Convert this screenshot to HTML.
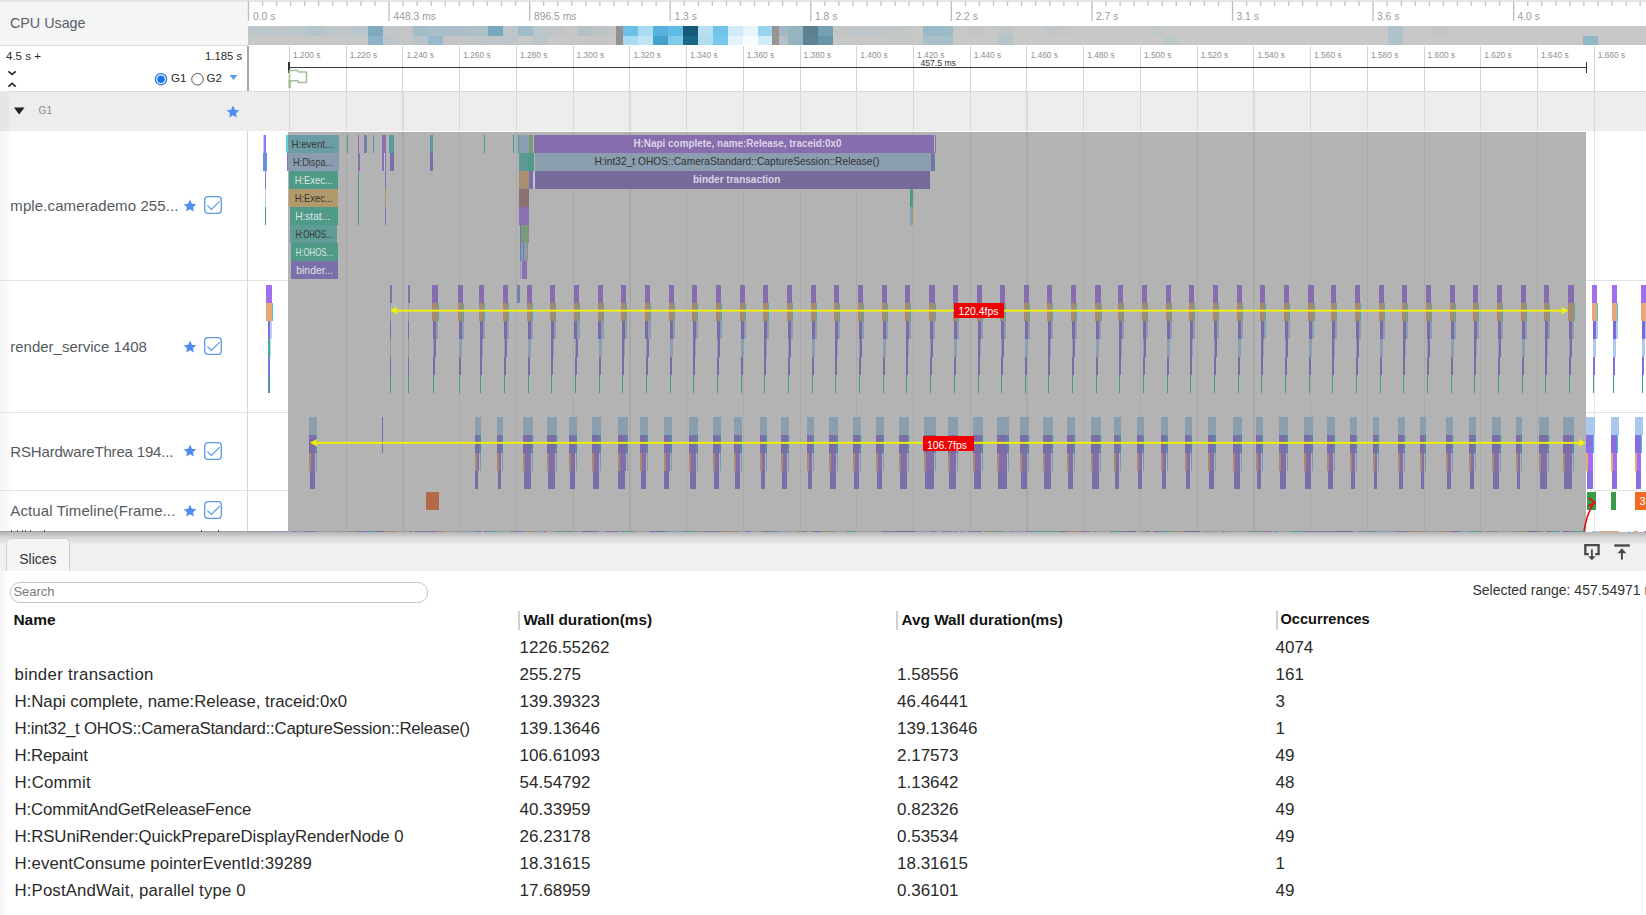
<!DOCTYPE html><html><head><meta charset="utf-8"><style>
html,body{margin:0;padding:0;}
body{width:1646px;height:915px;overflow:hidden;position:relative;background:#fff;font-family:"Liberation Sans", sans-serif;}
div{box-sizing:border-box;}
</style></head><body>
<div style="position:absolute;left:0px;top:0px;width:248px;height:46px;background:#f5f5f5;"></div>
<div style="position:absolute;left:0px;top:0px;width:1646px;height:1.6px;background:#e6e6e6;"></div>
<div style="position:absolute;left:0px;top:45px;width:248px;height:1px;background:#dcdcdc;"></div>
<div style="position:absolute;left:10px;top:16px;font-size:14.3px;line-height:1;color:#56606a;font-weight:400;white-space:nowrap;">CPU Usage</div>
<div style="position:absolute;left:248px;top:2px;width:1398px;height:24px;background:#ffffff;"></div>
<svg style="position:absolute;left:0;top:0" width="1646" height="46"><rect x="247.8" y="1" width="1.3" height="20" fill="#bdbdbd"/><rect x="261.9" y="1" width="1.3" height="5" fill="#c4c4c4"/><rect x="275.9" y="1" width="1.3" height="5" fill="#c4c4c4"/><rect x="290.0" y="1" width="1.3" height="5" fill="#c4c4c4"/><rect x="304.0" y="1" width="1.3" height="5" fill="#c4c4c4"/><rect x="318.1" y="1" width="1.3" height="5" fill="#c4c4c4"/><rect x="332.1" y="1" width="1.3" height="5" fill="#c4c4c4"/><rect x="346.2" y="1" width="1.3" height="5" fill="#c4c4c4"/><rect x="360.3" y="1" width="1.3" height="5" fill="#c4c4c4"/><rect x="374.3" y="1" width="1.3" height="5" fill="#c4c4c4"/><rect x="388.4" y="1" width="1.3" height="20" fill="#bdbdbd"/><rect x="402.4" y="1" width="1.3" height="5" fill="#c4c4c4"/><rect x="416.5" y="1" width="1.3" height="5" fill="#c4c4c4"/><rect x="430.6" y="1" width="1.3" height="5" fill="#c4c4c4"/><rect x="444.6" y="1" width="1.3" height="5" fill="#c4c4c4"/><rect x="458.7" y="1" width="1.3" height="5" fill="#c4c4c4"/><rect x="472.7" y="1" width="1.3" height="5" fill="#c4c4c4"/><rect x="486.8" y="1" width="1.3" height="5" fill="#c4c4c4"/><rect x="500.8" y="1" width="1.3" height="5" fill="#c4c4c4"/><rect x="514.9" y="1" width="1.3" height="5" fill="#c4c4c4"/><rect x="529.0" y="1" width="1.3" height="20" fill="#bdbdbd"/><rect x="543.0" y="1" width="1.3" height="5" fill="#c4c4c4"/><rect x="557.1" y="1" width="1.3" height="5" fill="#c4c4c4"/><rect x="571.1" y="1" width="1.3" height="5" fill="#c4c4c4"/><rect x="585.2" y="1" width="1.3" height="5" fill="#c4c4c4"/><rect x="599.2" y="1" width="1.3" height="5" fill="#c4c4c4"/><rect x="613.3" y="1" width="1.3" height="5" fill="#c4c4c4"/><rect x="627.4" y="1" width="1.3" height="5" fill="#c4c4c4"/><rect x="641.4" y="1" width="1.3" height="5" fill="#c4c4c4"/><rect x="655.5" y="1" width="1.3" height="5" fill="#c4c4c4"/><rect x="669.5" y="1" width="1.3" height="20" fill="#bdbdbd"/><rect x="683.6" y="1" width="1.3" height="5" fill="#c4c4c4"/><rect x="697.7" y="1" width="1.3" height="5" fill="#c4c4c4"/><rect x="711.7" y="1" width="1.3" height="5" fill="#c4c4c4"/><rect x="725.8" y="1" width="1.3" height="5" fill="#c4c4c4"/><rect x="739.8" y="1" width="1.3" height="5" fill="#c4c4c4"/><rect x="753.9" y="1" width="1.3" height="5" fill="#c4c4c4"/><rect x="767.9" y="1" width="1.3" height="5" fill="#c4c4c4"/><rect x="782.0" y="1" width="1.3" height="5" fill="#c4c4c4"/><rect x="796.1" y="1" width="1.3" height="5" fill="#c4c4c4"/><rect x="810.1" y="1" width="1.3" height="20" fill="#bdbdbd"/><rect x="824.2" y="1" width="1.3" height="5" fill="#c4c4c4"/><rect x="838.2" y="1" width="1.3" height="5" fill="#c4c4c4"/><rect x="852.3" y="1" width="1.3" height="5" fill="#c4c4c4"/><rect x="866.4" y="1" width="1.3" height="5" fill="#c4c4c4"/><rect x="880.4" y="1" width="1.3" height="5" fill="#c4c4c4"/><rect x="894.5" y="1" width="1.3" height="5" fill="#c4c4c4"/><rect x="908.5" y="1" width="1.3" height="5" fill="#c4c4c4"/><rect x="922.6" y="1" width="1.3" height="5" fill="#c4c4c4"/><rect x="936.6" y="1" width="1.3" height="5" fill="#c4c4c4"/><rect x="950.7" y="1" width="1.3" height="20" fill="#bdbdbd"/><rect x="964.8" y="1" width="1.3" height="5" fill="#c4c4c4"/><rect x="978.8" y="1" width="1.3" height="5" fill="#c4c4c4"/><rect x="992.9" y="1" width="1.3" height="5" fill="#c4c4c4"/><rect x="1006.9" y="1" width="1.3" height="5" fill="#c4c4c4"/><rect x="1021.0" y="1" width="1.3" height="5" fill="#c4c4c4"/><rect x="1035.0" y="1" width="1.3" height="5" fill="#c4c4c4"/><rect x="1049.1" y="1" width="1.3" height="5" fill="#c4c4c4"/><rect x="1063.2" y="1" width="1.3" height="5" fill="#c4c4c4"/><rect x="1077.2" y="1" width="1.3" height="5" fill="#c4c4c4"/><rect x="1091.3" y="1" width="1.3" height="20" fill="#bdbdbd"/><rect x="1105.3" y="1" width="1.3" height="5" fill="#c4c4c4"/><rect x="1119.4" y="1" width="1.3" height="5" fill="#c4c4c4"/><rect x="1133.5" y="1" width="1.3" height="5" fill="#c4c4c4"/><rect x="1147.5" y="1" width="1.3" height="5" fill="#c4c4c4"/><rect x="1161.6" y="1" width="1.3" height="5" fill="#c4c4c4"/><rect x="1175.6" y="1" width="1.3" height="5" fill="#c4c4c4"/><rect x="1189.7" y="1" width="1.3" height="5" fill="#c4c4c4"/><rect x="1203.7" y="1" width="1.3" height="5" fill="#c4c4c4"/><rect x="1217.8" y="1" width="1.3" height="5" fill="#c4c4c4"/><rect x="1231.9" y="1" width="1.3" height="20" fill="#bdbdbd"/><rect x="1245.9" y="1" width="1.3" height="5" fill="#c4c4c4"/><rect x="1260.0" y="1" width="1.3" height="5" fill="#c4c4c4"/><rect x="1274.0" y="1" width="1.3" height="5" fill="#c4c4c4"/><rect x="1288.1" y="1" width="1.3" height="5" fill="#c4c4c4"/><rect x="1302.1" y="1" width="1.3" height="5" fill="#c4c4c4"/><rect x="1316.2" y="1" width="1.3" height="5" fill="#c4c4c4"/><rect x="1330.3" y="1" width="1.3" height="5" fill="#c4c4c4"/><rect x="1344.3" y="1" width="1.3" height="5" fill="#c4c4c4"/><rect x="1358.4" y="1" width="1.3" height="5" fill="#c4c4c4"/><rect x="1372.4" y="1" width="1.3" height="20" fill="#bdbdbd"/><rect x="1386.5" y="1" width="1.3" height="5" fill="#c4c4c4"/><rect x="1400.6" y="1" width="1.3" height="5" fill="#c4c4c4"/><rect x="1414.6" y="1" width="1.3" height="5" fill="#c4c4c4"/><rect x="1428.7" y="1" width="1.3" height="5" fill="#c4c4c4"/><rect x="1442.7" y="1" width="1.3" height="5" fill="#c4c4c4"/><rect x="1456.8" y="1" width="1.3" height="5" fill="#c4c4c4"/><rect x="1470.8" y="1" width="1.3" height="5" fill="#c4c4c4"/><rect x="1484.9" y="1" width="1.3" height="5" fill="#c4c4c4"/><rect x="1499.0" y="1" width="1.3" height="5" fill="#c4c4c4"/><rect x="1513.0" y="1" width="1.3" height="20" fill="#bdbdbd"/><rect x="1527.1" y="1" width="1.3" height="5" fill="#c4c4c4"/><rect x="1541.1" y="1" width="1.3" height="5" fill="#c4c4c4"/><rect x="1555.2" y="1" width="1.3" height="5" fill="#c4c4c4"/><rect x="1569.3" y="1" width="1.3" height="5" fill="#c4c4c4"/><rect x="1583.3" y="1" width="1.3" height="5" fill="#c4c4c4"/><rect x="1597.4" y="1" width="1.3" height="5" fill="#c4c4c4"/><rect x="1611.4" y="1" width="1.3" height="5" fill="#c4c4c4"/><rect x="1625.5" y="1" width="1.3" height="5" fill="#c4c4c4"/><rect x="1639.5" y="1" width="1.3" height="5" fill="#c4c4c4"/></svg>
<div style="position:absolute;left:253.0px;top:12px;font-size:10.3px;line-height:1;color:#9a9a9a;font-weight:400;white-space:nowrap;">0.0 s</div>
<div style="position:absolute;left:393.5px;top:12px;font-size:10.3px;line-height:1;color:#9a9a9a;font-weight:400;white-space:nowrap;">448.3 ms</div>
<div style="position:absolute;left:534.0px;top:12px;font-size:10.3px;line-height:1;color:#9a9a9a;font-weight:400;white-space:nowrap;">896.5 ms</div>
<div style="position:absolute;left:674.5px;top:12px;font-size:10.3px;line-height:1;color:#9a9a9a;font-weight:400;white-space:nowrap;">1.3 s</div>
<div style="position:absolute;left:815.0px;top:12px;font-size:10.3px;line-height:1;color:#9a9a9a;font-weight:400;white-space:nowrap;">1.8 s</div>
<div style="position:absolute;left:955.5px;top:12px;font-size:10.3px;line-height:1;color:#9a9a9a;font-weight:400;white-space:nowrap;">2.2 s</div>
<div style="position:absolute;left:1096.0px;top:12px;font-size:10.3px;line-height:1;color:#9a9a9a;font-weight:400;white-space:nowrap;">2.7 s</div>
<div style="position:absolute;left:1236.5px;top:12px;font-size:10.3px;line-height:1;color:#9a9a9a;font-weight:400;white-space:nowrap;">3.1 s</div>
<div style="position:absolute;left:1377.0px;top:12px;font-size:10.3px;line-height:1;color:#9a9a9a;font-weight:400;white-space:nowrap;">3.6 s</div>
<div style="position:absolute;left:1517.5px;top:12px;font-size:10.3px;line-height:1;color:#9a9a9a;font-weight:400;white-space:nowrap;">4.0 s</div>
<svg style="position:absolute;left:0;top:0" width="1646" height="46" shape-rendering="crispEdges"><rect x="247.80" y="26" width="15.60" height="9.5" fill="#bcc6ca"/><rect x="247.80" y="35.5" width="15.60" height="9.5" fill="#c6c8c8"/><rect x="262.80" y="26" width="15.60" height="9.5" fill="#bcc6ca"/><rect x="262.80" y="35.5" width="15.60" height="9.5" fill="#c6c8c8"/><rect x="277.80" y="26" width="15.60" height="9.5" fill="#bec6ca"/><rect x="277.80" y="35.5" width="15.60" height="9.5" fill="#c4c8c8"/><rect x="292.80" y="26" width="15.60" height="9.5" fill="#bcc6ca"/><rect x="292.80" y="35.5" width="15.60" height="9.5" fill="#c6c8c8"/><rect x="307.80" y="26" width="15.60" height="9.5" fill="#b4c4cc"/><rect x="307.80" y="35.5" width="15.60" height="9.5" fill="#c4c8c8"/><rect x="322.80" y="26" width="15.60" height="9.5" fill="#bcc6ca"/><rect x="322.80" y="35.5" width="15.60" height="9.5" fill="#c6c8c8"/><rect x="337.80" y="26" width="15.60" height="9.5" fill="#bec6ca"/><rect x="337.80" y="35.5" width="15.60" height="9.5" fill="#c4c8c8"/><rect x="352.80" y="26" width="15.60" height="9.5" fill="#b8c6cc"/><rect x="352.80" y="35.5" width="15.60" height="9.5" fill="#c6c8c8"/><rect x="367.80" y="26" width="15.60" height="9.5" fill="#80aac0"/><rect x="367.80" y="35.5" width="15.60" height="9.5" fill="#8cb4c6"/><rect x="382.80" y="26" width="15.60" height="9.5" fill="#c2c6c8"/><rect x="382.80" y="35.5" width="15.60" height="9.5" fill="#bcc6ca"/><rect x="397.80" y="26" width="15.60" height="9.5" fill="#c4c6c6"/><rect x="397.80" y="35.5" width="15.60" height="9.5" fill="#c4c6c6"/><rect x="412.80" y="26" width="15.60" height="9.5" fill="#a2bcc8"/><rect x="412.80" y="35.5" width="15.60" height="9.5" fill="#b8c4ca"/><rect x="427.80" y="26" width="15.60" height="9.5" fill="#a8bec8"/><rect x="427.80" y="35.5" width="15.60" height="9.5" fill="#98bacc"/><rect x="442.80" y="26" width="15.60" height="9.5" fill="#aabec8"/><rect x="442.80" y="35.5" width="15.60" height="9.5" fill="#c4c6c6"/><rect x="457.80" y="26" width="15.60" height="9.5" fill="#acbec8"/><rect x="457.80" y="35.5" width="15.60" height="9.5" fill="#c4c6c6"/><rect x="472.80" y="26" width="15.60" height="9.5" fill="#aec0c8"/><rect x="472.80" y="35.5" width="15.60" height="9.5" fill="#bcc6ca"/><rect x="487.80" y="26" width="15.60" height="9.5" fill="#78a8c0"/><rect x="487.80" y="35.5" width="15.60" height="9.5" fill="#c0c6c8"/><rect x="502.80" y="26" width="15.60" height="9.5" fill="#bcc6ca"/><rect x="502.80" y="35.5" width="15.60" height="9.5" fill="#bcc6ca"/><rect x="517.80" y="26" width="15.60" height="9.5" fill="#a0bccc"/><rect x="517.80" y="35.5" width="15.60" height="9.5" fill="#c6c8c8"/><rect x="532.80" y="26" width="15.60" height="9.5" fill="#bcc6ca"/><rect x="532.80" y="35.5" width="15.60" height="9.5" fill="#bcc6ca"/><rect x="547.80" y="26" width="15.60" height="9.5" fill="#c0c4c6"/><rect x="547.80" y="35.5" width="15.60" height="9.5" fill="#c8c8c8"/><rect x="562.80" y="26" width="15.60" height="9.5" fill="#c6c6c6"/><rect x="562.80" y="35.5" width="15.60" height="9.5" fill="#c8c6c6"/><rect x="577.80" y="26" width="15.60" height="9.5" fill="#b4c0c6"/><rect x="577.80" y="35.5" width="15.60" height="9.5" fill="#c4c6c6"/><rect x="592.80" y="26" width="15.60" height="9.5" fill="#bcc4c6"/><rect x="592.80" y="35.5" width="15.60" height="9.5" fill="#c4c6c6"/><rect x="607.80" y="26" width="15.60" height="9.5" fill="#c4c4c4"/><rect x="607.80" y="35.5" width="15.60" height="9.5" fill="#c8c8c8"/><rect x="622.80" y="26" width="15.60" height="9.5" fill="#6cc0e8"/><rect x="622.80" y="35.5" width="15.60" height="9.5" fill="#a8daf0"/><rect x="637.80" y="26" width="15.60" height="9.5" fill="#a8daf0"/><rect x="637.80" y="35.5" width="15.60" height="9.5" fill="#c0e4f4"/><rect x="652.80" y="26" width="15.60" height="9.5" fill="#58b0dc"/><rect x="652.80" y="35.5" width="15.60" height="9.5" fill="#44a0cc"/><rect x="667.80" y="26" width="15.60" height="9.5" fill="#60bce4"/><rect x="667.80" y="35.5" width="15.60" height="9.5" fill="#80cce8"/><rect x="682.80" y="26" width="15.60" height="9.5" fill="#185878"/><rect x="682.80" y="35.5" width="15.60" height="9.5" fill="#186a88"/><rect x="697.80" y="26" width="15.60" height="9.5" fill="#b8e0f4"/><rect x="697.80" y="35.5" width="15.60" height="9.5" fill="#b0dcf0"/><rect x="712.80" y="26" width="15.60" height="9.5" fill="#70c4e8"/><rect x="712.80" y="35.5" width="15.60" height="9.5" fill="#78c8ec"/><rect x="727.80" y="26" width="15.60" height="9.5" fill="#d0ecf8"/><rect x="727.80" y="35.5" width="15.60" height="9.5" fill="#e4f4fc"/><rect x="742.80" y="26" width="15.60" height="9.5" fill="#e8f6fc"/><rect x="742.80" y="35.5" width="15.60" height="9.5" fill="#f8fcfe"/><rect x="757.80" y="26" width="15.60" height="9.5" fill="#98d4f0"/><rect x="757.80" y="35.5" width="15.60" height="9.5" fill="#d0ecf8"/><rect x="772.80" y="26" width="15.60" height="9.5" fill="#a2b8c0"/><rect x="772.80" y="35.5" width="15.60" height="9.5" fill="#b4c0c4"/><rect x="787.80" y="26" width="15.60" height="9.5" fill="#94b4c0"/><rect x="787.80" y="35.5" width="15.60" height="9.5" fill="#94b4c0"/><rect x="802.80" y="26" width="15.60" height="9.5" fill="#5c8090"/><rect x="802.80" y="35.5" width="15.60" height="9.5" fill="#5c8494"/><rect x="817.80" y="26" width="15.60" height="9.5" fill="#74a0b4"/><rect x="817.80" y="35.5" width="15.60" height="9.5" fill="#6894a4"/><rect x="832.80" y="26" width="15.60" height="9.5" fill="#c4c6c6"/><rect x="832.80" y="35.5" width="15.60" height="9.5" fill="#c6c8c8"/><rect x="847.80" y="26" width="15.60" height="9.5" fill="#bec6ca"/><rect x="847.80" y="35.5" width="15.60" height="9.5" fill="#c6c8c8"/><rect x="862.80" y="26" width="15.60" height="9.5" fill="#bec6ca"/><rect x="862.80" y="35.5" width="15.60" height="9.5" fill="#c6c8c8"/><rect x="877.80" y="26" width="15.60" height="9.5" fill="#c2c6c8"/><rect x="877.80" y="35.5" width="15.60" height="9.5" fill="#c6c8c8"/><rect x="892.80" y="26" width="15.60" height="9.5" fill="#c2c6c8"/><rect x="892.80" y="35.5" width="15.60" height="9.5" fill="#c4c6c8"/><rect x="907.80" y="26" width="15.60" height="9.5" fill="#c6c8c8"/><rect x="907.80" y="35.5" width="15.60" height="9.5" fill="#c6c8c8"/><rect x="922.80" y="26" width="15.60" height="9.5" fill="#98bac8"/><rect x="922.80" y="35.5" width="15.60" height="9.5" fill="#a8c0ca"/><rect x="937.80" y="26" width="15.60" height="9.5" fill="#9cbcc8"/><rect x="937.80" y="35.5" width="15.60" height="9.5" fill="#a8c0ca"/><rect x="952.80" y="26" width="15.60" height="9.5" fill="#c8c8c8"/><rect x="952.80" y="35.5" width="15.60" height="9.5" fill="#c8c8c8"/><rect x="967.80" y="26" width="15.60" height="9.5" fill="#c2c6c8"/><rect x="967.80" y="35.5" width="15.60" height="9.5" fill="#c8c8c8"/><rect x="982.80" y="26" width="15.60" height="9.5" fill="#c6c8c8"/><rect x="982.80" y="35.5" width="15.60" height="9.5" fill="#c8c8c8"/><rect x="997.80" y="26" width="15.60" height="9.5" fill="#c0c6c8"/><rect x="997.80" y="35.5" width="15.60" height="9.5" fill="#b4c4c8"/><rect x="1012.80" y="26" width="15.60" height="9.5" fill="#c8c8c8"/><rect x="1012.80" y="35.5" width="15.60" height="9.5" fill="#c8c8c8"/><rect x="1027.80" y="26" width="15.60" height="9.5" fill="#c8c8c8"/><rect x="1027.80" y="35.5" width="15.60" height="9.5" fill="#c8c8c8"/><rect x="1042.80" y="26" width="15.60" height="9.5" fill="#c2c6c8"/><rect x="1042.80" y="35.5" width="15.60" height="9.5" fill="#c8c8c8"/><rect x="1057.80" y="26" width="15.60" height="9.5" fill="#c4c6c8"/><rect x="1057.80" y="35.5" width="15.60" height="9.5" fill="#c8c8c8"/><rect x="1072.80" y="26" width="15.60" height="9.5" fill="#c8c8c8"/><rect x="1072.80" y="35.5" width="15.60" height="9.5" fill="#c8c8c8"/><rect x="1087.80" y="26" width="15.60" height="9.5" fill="#c8c8c8"/><rect x="1087.80" y="35.5" width="15.60" height="9.5" fill="#c8c8c8"/><rect x="1102.80" y="26" width="15.60" height="9.5" fill="#c8c8c8"/><rect x="1102.80" y="35.5" width="15.60" height="9.5" fill="#c8c8c8"/><rect x="1117.80" y="26" width="15.60" height="9.5" fill="#c8c8c8"/><rect x="1117.80" y="35.5" width="15.60" height="9.5" fill="#c8c8c8"/><rect x="1132.80" y="26" width="15.60" height="9.5" fill="#c8c8c8"/><rect x="1132.80" y="35.5" width="15.60" height="9.5" fill="#c8c8c8"/><rect x="1147.80" y="26" width="15.60" height="9.5" fill="#c0c8ca"/><rect x="1147.80" y="35.5" width="15.60" height="9.5" fill="#c8c8c8"/><rect x="1162.80" y="26" width="15.60" height="9.5" fill="#c8c8c8"/><rect x="1162.80" y="35.5" width="15.60" height="9.5" fill="#bcc8c6"/><rect x="1177.80" y="26" width="15.60" height="9.5" fill="#c8c8c8"/><rect x="1177.80" y="35.5" width="15.60" height="9.5" fill="#c8c8c8"/><rect x="1192.80" y="26" width="15.60" height="9.5" fill="#c8c8c8"/><rect x="1192.80" y="35.5" width="15.60" height="9.5" fill="#c8c8c8"/><rect x="1207.80" y="26" width="15.60" height="9.5" fill="#c8c8c8"/><rect x="1207.80" y="35.5" width="15.60" height="9.5" fill="#c8c8c8"/><rect x="1222.80" y="26" width="15.60" height="9.5" fill="#c8c8c8"/><rect x="1222.80" y="35.5" width="15.60" height="9.5" fill="#c8c8c8"/><rect x="1237.80" y="26" width="15.60" height="9.5" fill="#c8c8c8"/><rect x="1237.80" y="35.5" width="15.60" height="9.5" fill="#c8c8c8"/><rect x="1252.80" y="26" width="15.60" height="9.5" fill="#c8c8c8"/><rect x="1252.80" y="35.5" width="15.60" height="9.5" fill="#c8c8c8"/><rect x="1267.80" y="26" width="15.60" height="9.5" fill="#c8c8c8"/><rect x="1267.80" y="35.5" width="15.60" height="9.5" fill="#c8c8c8"/><rect x="1282.80" y="26" width="15.60" height="9.5" fill="#c8c8c8"/><rect x="1282.80" y="35.5" width="15.60" height="9.5" fill="#c8c8c8"/><rect x="1297.80" y="26" width="15.60" height="9.5" fill="#c8c8c8"/><rect x="1297.80" y="35.5" width="15.60" height="9.5" fill="#c8c8c8"/><rect x="1312.80" y="26" width="15.60" height="9.5" fill="#c8c8c8"/><rect x="1312.80" y="35.5" width="15.60" height="9.5" fill="#c8c8c8"/><rect x="1327.80" y="26" width="15.60" height="9.5" fill="#c8c8c8"/><rect x="1327.80" y="35.5" width="15.60" height="9.5" fill="#c8c8c8"/><rect x="1342.80" y="26" width="15.60" height="9.5" fill="#c8c8c8"/><rect x="1342.80" y="35.5" width="15.60" height="9.5" fill="#c8c8c8"/><rect x="1357.80" y="26" width="15.60" height="9.5" fill="#c8c8c8"/><rect x="1357.80" y="35.5" width="15.60" height="9.5" fill="#c8c8c8"/><rect x="1372.80" y="26" width="15.60" height="9.5" fill="#c8c8c8"/><rect x="1372.80" y="35.5" width="15.60" height="9.5" fill="#c8c8c8"/><rect x="1387.80" y="26" width="15.60" height="9.5" fill="#adc2ca"/><rect x="1387.80" y="35.5" width="15.60" height="9.5" fill="#adc2ca"/><rect x="1402.80" y="26" width="15.60" height="9.5" fill="#c8c8c8"/><rect x="1402.80" y="35.5" width="15.60" height="9.5" fill="#c8c8c8"/><rect x="1417.80" y="26" width="15.60" height="9.5" fill="#c8c8c8"/><rect x="1417.80" y="35.5" width="15.60" height="9.5" fill="#c8c8c8"/><rect x="1432.80" y="26" width="15.60" height="9.5" fill="#c0c6c8"/><rect x="1432.80" y="35.5" width="15.60" height="9.5" fill="#c8c8c8"/><rect x="1447.80" y="26" width="15.60" height="9.5" fill="#c8c8c8"/><rect x="1447.80" y="35.5" width="15.60" height="9.5" fill="#c8c8c8"/><rect x="1462.80" y="26" width="15.60" height="9.5" fill="#c8c8c8"/><rect x="1462.80" y="35.5" width="15.60" height="9.5" fill="#c8c8c8"/><rect x="1477.80" y="26" width="15.60" height="9.5" fill="#c8c8c8"/><rect x="1477.80" y="35.5" width="15.60" height="9.5" fill="#c8c8c8"/><rect x="1492.80" y="26" width="15.60" height="9.5" fill="#c8c8c8"/><rect x="1492.80" y="35.5" width="15.60" height="9.5" fill="#c8c8c8"/><rect x="1507.80" y="26" width="15.60" height="9.5" fill="#c8c8c8"/><rect x="1507.80" y="35.5" width="15.60" height="9.5" fill="#c8c8c8"/><rect x="1522.80" y="26" width="15.60" height="9.5" fill="#c8c8c8"/><rect x="1522.80" y="35.5" width="15.60" height="9.5" fill="#c8c8c8"/><rect x="1537.80" y="26" width="15.60" height="9.5" fill="#c8c8c8"/><rect x="1537.80" y="35.5" width="15.60" height="9.5" fill="#c8c8c8"/><rect x="1552.80" y="26" width="15.60" height="9.5" fill="#c8c8c8"/><rect x="1552.80" y="35.5" width="15.60" height="9.5" fill="#c8c8c8"/><rect x="1567.80" y="26" width="15.60" height="9.5" fill="#c8c8c8"/><rect x="1567.80" y="35.5" width="15.60" height="9.5" fill="#c8c8c8"/><rect x="1582.80" y="26" width="15.60" height="9.5" fill="#c8c8c8"/><rect x="1582.80" y="35.5" width="15.60" height="9.5" fill="#90b8c8"/><rect x="1597.80" y="26" width="15.60" height="9.5" fill="#c8c8c8"/><rect x="1597.80" y="35.5" width="15.60" height="9.5" fill="#c8c8c8"/><rect x="1612.80" y="26" width="15.60" height="9.5" fill="#c8c8c8"/><rect x="1612.80" y="35.5" width="15.60" height="9.5" fill="#c8c8c8"/><rect x="1627.80" y="26" width="15.60" height="9.5" fill="#c8c8c8"/><rect x="1627.80" y="35.5" width="15.60" height="9.5" fill="#c8c8c8"/><rect x="1642.80" y="26" width="3.20" height="9.5" fill="#c8c8c8"/><rect x="1642.80" y="35.5" width="3.20" height="9.5" fill="#c8c8c8"/><rect x="616" y="26" width="6.5" height="19" fill="#929292"/><rect x="772" y="26" width="6.5" height="19" fill="#989494"/></svg>
<div style="position:absolute;left:0px;top:46px;width:248px;height:45px;background:#ffffff;"></div>
<div style="position:absolute;left:6px;top:51px;font-size:11.5px;line-height:1;color:#2a2a2a;font-weight:400;white-space:nowrap;">4.5 s +</div>
<div style="position:absolute;left:205px;top:51px;font-size:11.3px;line-height:1;color:#2a2a2a;font-weight:400;white-space:nowrap;">1.185 s</div>
<svg style="position:absolute;left:6px;top:68px" width="14" height="22"><path d="M2.4 3.3 L6.1 6.4 L9.7 3.3" stroke="#2a2a2a" stroke-width="1.7" fill="none"/><path d="M2.4 18.6 L6.1 15.4 L9.7 18.6" stroke="#2a2a2a" stroke-width="1.7" fill="none"/></svg>
<svg style="position:absolute;left:152px;top:70px" width="90" height="18"><circle cx="9" cy="9.2" r="5.6" fill="#fff" stroke="#1a73e8" stroke-width="1.2"/><circle cx="9" cy="9.2" r="3.8" fill="#1a73e8"/><circle cx="45.5" cy="9.2" r="5.8" fill="#fff" stroke="#555" stroke-width="1"/><path d="M77.5 5 L85.5 5 L81.5 10 Z" fill="#5a9ae8"/></svg>
<div style="position:absolute;left:171px;top:73px;font-size:11.5px;line-height:1;color:#2a2a2a;font-weight:400;white-space:nowrap;">G1</div>
<div style="position:absolute;left:206.5px;top:73px;font-size:11.5px;line-height:1;color:#2a2a2a;font-weight:400;white-space:nowrap;">G2</div>
<div style="position:absolute;left:247px;top:46px;width:2px;height:45px;background:#a8a8a8;"></div>
<div style="position:absolute;left:249px;top:46px;width:1397px;height:45px;background:#ffffff;"></div>
<svg style="position:absolute;left:0;top:0" width="1646" height="915" shape-rendering="crispEdges"><rect x="288.9" y="46" width="1" height="45" fill="#d4d4d4"/><rect x="345.6" y="46" width="1" height="45" fill="#d4d4d4"/><rect x="402.4" y="46" width="1" height="45" fill="#d4d4d4"/><rect x="459.1" y="46" width="1" height="45" fill="#d4d4d4"/><rect x="515.8" y="46" width="1" height="45" fill="#d4d4d4"/><rect x="572.5" y="46" width="1" height="45" fill="#d4d4d4"/><rect x="629.3" y="46" width="1" height="45" fill="#d4d4d4"/><rect x="686.0" y="46" width="1" height="45" fill="#d4d4d4"/><rect x="742.7" y="46" width="1" height="45" fill="#d4d4d4"/><rect x="799.5" y="46" width="1" height="45" fill="#d4d4d4"/><rect x="856.2" y="46" width="1" height="45" fill="#d4d4d4"/><rect x="912.9" y="46" width="1" height="45" fill="#d4d4d4"/><rect x="969.7" y="46" width="1" height="45" fill="#d4d4d4"/><rect x="1026.4" y="46" width="1" height="45" fill="#d4d4d4"/><rect x="1083.1" y="46" width="1" height="45" fill="#d4d4d4"/><rect x="1139.8" y="46" width="1" height="45" fill="#d4d4d4"/><rect x="1196.6" y="46" width="1" height="45" fill="#d4d4d4"/><rect x="1253.3" y="46" width="1" height="45" fill="#d4d4d4"/><rect x="1310.0" y="46" width="1" height="45" fill="#d4d4d4"/><rect x="1366.8" y="46" width="1" height="45" fill="#d4d4d4"/><rect x="1423.5" y="46" width="1" height="45" fill="#d4d4d4"/><rect x="1480.2" y="46" width="1" height="45" fill="#d4d4d4"/><rect x="1537.0" y="46" width="1" height="45" fill="#d4d4d4"/><rect x="1593.7" y="46" width="1" height="45" fill="#d4d4d4"/></svg>
<div style="position:absolute;left:293.0px;top:50.5px;font-size:8.4px;line-height:1;color:#8f8f8f;font-weight:400;white-space:nowrap;">1.200 s</div>
<div style="position:absolute;left:349.7px;top:50.5px;font-size:8.4px;line-height:1;color:#8f8f8f;font-weight:400;white-space:nowrap;">1.220 s</div>
<div style="position:absolute;left:406.5px;top:50.5px;font-size:8.4px;line-height:1;color:#8f8f8f;font-weight:400;white-space:nowrap;">1.240 s</div>
<div style="position:absolute;left:463.2px;top:50.5px;font-size:8.4px;line-height:1;color:#8f8f8f;font-weight:400;white-space:nowrap;">1.260 s</div>
<div style="position:absolute;left:519.9px;top:50.5px;font-size:8.4px;line-height:1;color:#8f8f8f;font-weight:400;white-space:nowrap;">1.280 s</div>
<div style="position:absolute;left:576.6px;top:50.5px;font-size:8.4px;line-height:1;color:#8f8f8f;font-weight:400;white-space:nowrap;">1.300 s</div>
<div style="position:absolute;left:633.4px;top:50.5px;font-size:8.4px;line-height:1;color:#8f8f8f;font-weight:400;white-space:nowrap;">1.320 s</div>
<div style="position:absolute;left:690.1px;top:50.5px;font-size:8.4px;line-height:1;color:#8f8f8f;font-weight:400;white-space:nowrap;">1.340 s</div>
<div style="position:absolute;left:746.8px;top:50.5px;font-size:8.4px;line-height:1;color:#8f8f8f;font-weight:400;white-space:nowrap;">1.360 s</div>
<div style="position:absolute;left:803.6px;top:50.5px;font-size:8.4px;line-height:1;color:#8f8f8f;font-weight:400;white-space:nowrap;">1.380 s</div>
<div style="position:absolute;left:860.3px;top:50.5px;font-size:8.4px;line-height:1;color:#8f8f8f;font-weight:400;white-space:nowrap;">1.400 s</div>
<div style="position:absolute;left:917.0px;top:50.5px;font-size:8.4px;line-height:1;color:#8f8f8f;font-weight:400;white-space:nowrap;">1.420 s</div>
<div style="position:absolute;left:973.8px;top:50.5px;font-size:8.4px;line-height:1;color:#8f8f8f;font-weight:400;white-space:nowrap;">1.440 s</div>
<div style="position:absolute;left:1030.5px;top:50.5px;font-size:8.4px;line-height:1;color:#8f8f8f;font-weight:400;white-space:nowrap;">1.460 s</div>
<div style="position:absolute;left:1087.2px;top:50.5px;font-size:8.4px;line-height:1;color:#8f8f8f;font-weight:400;white-space:nowrap;">1.480 s</div>
<div style="position:absolute;left:1143.9px;top:50.5px;font-size:8.4px;line-height:1;color:#8f8f8f;font-weight:400;white-space:nowrap;">1.500 s</div>
<div style="position:absolute;left:1200.7px;top:50.5px;font-size:8.4px;line-height:1;color:#8f8f8f;font-weight:400;white-space:nowrap;">1.520 s</div>
<div style="position:absolute;left:1257.4px;top:50.5px;font-size:8.4px;line-height:1;color:#8f8f8f;font-weight:400;white-space:nowrap;">1.540 s</div>
<div style="position:absolute;left:1314.1px;top:50.5px;font-size:8.4px;line-height:1;color:#8f8f8f;font-weight:400;white-space:nowrap;">1.560 s</div>
<div style="position:absolute;left:1370.9px;top:50.5px;font-size:8.4px;line-height:1;color:#8f8f8f;font-weight:400;white-space:nowrap;">1.580 s</div>
<div style="position:absolute;left:1427.6px;top:50.5px;font-size:8.4px;line-height:1;color:#8f8f8f;font-weight:400;white-space:nowrap;">1.600 s</div>
<div style="position:absolute;left:1484.3px;top:50.5px;font-size:8.4px;line-height:1;color:#8f8f8f;font-weight:400;white-space:nowrap;">1.620 s</div>
<div style="position:absolute;left:1541.1px;top:50.5px;font-size:8.4px;line-height:1;color:#8f8f8f;font-weight:400;white-space:nowrap;">1.640 s</div>
<div style="position:absolute;left:1597.8px;top:50.5px;font-size:8.4px;line-height:1;color:#8f8f8f;font-weight:400;white-space:nowrap;">1.660 s</div>
<div style="position:absolute;left:920.5px;top:58.5px;font-size:8.6px;line-height:1;color:#333;font-weight:400;white-space:nowrap;">457.5 ms</div>
<div style="position:absolute;left:288px;top:66.6px;width:1299px;height:1.6px;background:#383838;"></div>
<div style="position:absolute;left:288.2px;top:62.2px;width:1.7px;height:10.5px;background:#333;"></div>
<div style="position:absolute;left:1585.6px;top:62.2px;width:1.7px;height:10.5px;background:#333;"></div>
<svg style="position:absolute;left:286px;top:68px" width="24" height="22"><path d="M3.5 19.5 L3.5 2.5 L11.5 2.5 L12.5 4 L20.5 4 L20.5 14.5 L12.5 14.5 L11.5 12.7 L4 12.7" stroke="#a5bf98" stroke-width="1.6" fill="none" stroke-linejoin="round"/><rect x="2.5" y="12" width="2.5" height="8" fill="#a5bf98"/></svg>
<div style="position:absolute;left:0px;top:90.5px;width:1646px;height:1px;background:#d8d8d8;"></div>
<div style="position:absolute;left:0px;top:91px;width:1646px;height:40px;background:#ededed;"></div>
<div style="position:absolute;left:0px;top:90.6px;width:1646px;height:1.2px;background:#d8d8d8;"></div>
<div style="position:absolute;left:0px;top:91px;width:9px;height:40px;background:#e6e6e6;"></div>
<svg style="position:absolute;left:13px;top:106px" width="14" height="10"><path d="M1 1.5 L11.5 1.5 L6.2 8.5 Z" fill="#222"/></svg>
<div style="position:absolute;left:38.5px;top:106.3px;font-size:10.2px;line-height:1;color:#8a8a8a;font-weight:400;white-space:nowrap;">G1</div>
<svg style="position:absolute;left:225.5px;top:105.4px" width="14" height="14"><path d="M7.00 0.60 L8.85 4.65 L13.28 5.16 L10.00 8.17 L10.88 12.54 L7.00 10.35 L3.12 12.54 L4.00 8.17 L0.72 5.16 L5.15 4.65 Z" fill="#4f8ef0"/></svg>
<svg style="position:absolute;left:0;top:0" width="1646" height="915" shape-rendering="crispEdges"><rect x="288.9" y="91" width="1.2" height="41" fill="#d9d9d9"/><rect x="345.6" y="91" width="1.2" height="41" fill="#d9d9d9"/><rect x="402.4" y="91" width="1.2" height="41" fill="#d9d9d9"/><rect x="459.1" y="91" width="1.2" height="41" fill="#d9d9d9"/><rect x="515.8" y="91" width="1.2" height="41" fill="#d9d9d9"/><rect x="572.5" y="91" width="1.2" height="41" fill="#d9d9d9"/><rect x="629.3" y="91" width="1.2" height="41" fill="#d9d9d9"/><rect x="686.0" y="91" width="1.2" height="41" fill="#d9d9d9"/><rect x="742.7" y="91" width="1.2" height="41" fill="#d9d9d9"/><rect x="799.5" y="91" width="1.2" height="41" fill="#d9d9d9"/><rect x="856.2" y="91" width="1.2" height="41" fill="#d9d9d9"/><rect x="912.9" y="91" width="1.2" height="41" fill="#d9d9d9"/><rect x="969.7" y="91" width="1.2" height="41" fill="#d9d9d9"/><rect x="1026.4" y="91" width="1.2" height="41" fill="#d9d9d9"/><rect x="1083.1" y="91" width="1.2" height="41" fill="#d9d9d9"/><rect x="1139.8" y="91" width="1.2" height="41" fill="#d9d9d9"/><rect x="1196.6" y="91" width="1.2" height="41" fill="#d9d9d9"/><rect x="1253.3" y="91" width="1.2" height="41" fill="#d9d9d9"/><rect x="1310.0" y="91" width="1.2" height="41" fill="#d9d9d9"/><rect x="1366.8" y="91" width="1.2" height="41" fill="#d9d9d9"/><rect x="1423.5" y="91" width="1.2" height="41" fill="#d9d9d9"/><rect x="1480.2" y="91" width="1.2" height="41" fill="#d9d9d9"/><rect x="1537.0" y="91" width="1.2" height="41" fill="#d9d9d9"/><rect x="1593.7" y="91" width="1.2" height="41" fill="#d9d9d9"/></svg>
<div style="position:absolute;left:0px;top:131px;width:1646px;height:400px;background:#ffffff;"></div>
<div style="position:absolute;left:0;top:131px;width:12px;height:400px;background:linear-gradient(to right,#f4f4f4,#fafafa 60%,#fff)"></div>
<div style="position:absolute;left:0px;top:280px;width:1646px;height:1px;background:#e2e2e2;"></div>
<div style="position:absolute;left:0px;top:412px;width:1646px;height:1px;background:#e2e2e2;"></div>
<div style="position:absolute;left:0px;top:490px;width:1646px;height:1px;background:#e2e2e2;"></div>
<div style="position:absolute;left:247px;top:131px;width:1px;height:400px;background:#d8d8d8;"></div>
<div style="position:absolute;left:1594px;top:131px;width:1px;height:400px;background:#e6e6e6;"></div>
<div style="position:absolute;left:288px;top:132px;width:1298px;height:399px;background:#b3b3b3;"></div>
<svg style="position:absolute;left:0;top:0" width="1646" height="915" shape-rendering="crispEdges"><rect x="345.6" y="132" width="1.2" height="399" fill="#a9a9a9"/><rect x="402.4" y="132" width="1.2" height="399" fill="#a9a9a9"/><rect x="459.1" y="132" width="1.2" height="399" fill="#a9a9a9"/><rect x="515.8" y="132" width="1.2" height="399" fill="#a9a9a9"/><rect x="572.5" y="132" width="1.2" height="399" fill="#a9a9a9"/><rect x="629.3" y="132" width="1.2" height="399" fill="#a9a9a9"/><rect x="686.0" y="132" width="1.2" height="399" fill="#a9a9a9"/><rect x="742.7" y="132" width="1.2" height="399" fill="#a9a9a9"/><rect x="799.5" y="132" width="1.2" height="399" fill="#a9a9a9"/><rect x="856.2" y="132" width="1.2" height="399" fill="#a9a9a9"/><rect x="912.9" y="132" width="1.2" height="399" fill="#a9a9a9"/><rect x="969.7" y="132" width="1.2" height="399" fill="#a9a9a9"/><rect x="1026.4" y="132" width="1.2" height="399" fill="#a9a9a9"/><rect x="1083.1" y="132" width="1.2" height="399" fill="#a9a9a9"/><rect x="1139.8" y="132" width="1.2" height="399" fill="#a9a9a9"/><rect x="1196.6" y="132" width="1.2" height="399" fill="#a9a9a9"/><rect x="1253.3" y="132" width="1.2" height="399" fill="#a9a9a9"/><rect x="1310.0" y="132" width="1.2" height="399" fill="#a9a9a9"/><rect x="1366.8" y="132" width="1.2" height="399" fill="#a9a9a9"/><rect x="1423.5" y="132" width="1.2" height="399" fill="#a9a9a9"/><rect x="1480.2" y="132" width="1.2" height="399" fill="#a9a9a9"/><rect x="1537.0" y="132" width="1.2" height="399" fill="#a9a9a9"/></svg>
<svg style="position:absolute;left:0;top:0" width="1646" height="915" shape-rendering="crispEdges"><rect x="263" y="135" width="3" height="18" fill="#a070f0"/><rect x="262.5" y="135" width="1" height="18" fill="#a8d8f0"/><rect x="263" y="153" width="3.5" height="18" fill="#6a8ee0"/><rect x="265" y="171" width="1" height="18" fill="#8a70e0"/><rect x="265" y="189" width="1" height="18" fill="#b8d0f0"/><rect x="265" y="207" width="1" height="18" fill="#30a090"/><rect x="286" y="135" width="2" height="18" fill="#5fd0e0"/><rect x="288" y="135" width="51" height="18" fill="#6a9ea4"/><rect x="287" y="153" width="1" height="18" fill="#8a70d0"/><rect x="288" y="153" width="51" height="18" fill="#8a9db0"/><rect x="289" y="171" width="49" height="18" fill="#4f9a88"/><rect x="289" y="189" width="49" height="18" fill="#b39a6a"/><rect x="290" y="207" width="48" height="18" fill="#4f9a88"/><rect x="290" y="225" width="47" height="18" fill="#609c96"/><rect x="291" y="243" width="47" height="18" fill="#4f9a88"/><rect x="291" y="261" width="47" height="18" fill="#7a70aa"/><rect x="347.3" y="135" width="1" height="18" fill="#4a9a9a"/><rect x="358.3" y="135" width="1" height="18" fill="#8a70b0"/><rect x="364" y="135" width="1.5" height="18" fill="#8a70b0"/><rect x="365.5" y="135" width="1.5" height="18" fill="#4a9a9a"/><rect x="373.4" y="135" width="1" height="18" fill="#4a9a9a"/><rect x="382" y="135" width="4" height="18" fill="#8a70b0"/><rect x="389.2" y="135" width="4.6" height="18" fill="#5e9a9c"/><rect x="430" y="135" width="3" height="18" fill="#5e9a9c"/><rect x="484.4" y="135" width="1" height="18" fill="#4a9a9a"/><rect x="513.2" y="135" width="1" height="18" fill="#4a9a9a"/><rect x="518" y="135" width="1" height="18" fill="#4a9a9a"/><rect x="358.3" y="153" width="1.5" height="18" fill="#8a70b0"/><rect x="382" y="153" width="1.5" height="18" fill="#8a70b0"/><rect x="383.5" y="153" width="1" height="18" fill="#c8c0e0"/><rect x="384.5" y="153" width="1.5" height="18" fill="#8a70b0"/><rect x="390" y="153" width="4" height="18" fill="#7a70a8"/><rect x="430" y="153" width="3" height="18" fill="#7a70a8"/><rect x="358.3" y="171" width="1" height="18" fill="#4a9a90"/><rect x="385.2" y="171" width="1" height="18" fill="#8a70b0"/><rect x="358.3" y="189" width="1" height="18" fill="#4a9a90"/><rect x="385.2" y="189" width="1" height="18" fill="#b09070"/><rect x="358.3" y="207" width="1" height="18" fill="#4a9a90"/><rect x="385.2" y="207" width="1" height="18" fill="#8a70b0"/><rect x="519" y="135" width="9.5" height="18" fill="#8c9fb0"/><rect x="528.5" y="135" width="4" height="18" fill="#7a9a78"/><rect x="519" y="153" width="9" height="18" fill="#5e9a94"/><rect x="528" y="153" width="6" height="18" fill="#4d9a88"/><rect x="519" y="171" width="10" height="18" fill="#a89070"/><rect x="529" y="171" width="4" height="18" fill="#7a70a8"/><rect x="533" y="171" width="2" height="18" fill="#c8c0d8"/><rect x="519" y="189" width="10" height="18" fill="#8a7272"/><rect x="519" y="207" width="10" height="18" fill="#8a70b0"/><rect x="520" y="225" width="1" height="18" fill="#6a7ab0"/><rect x="521" y="225" width="8" height="18" fill="#7a9a78"/><rect x="520" y="243" width="1" height="18" fill="#6a7ab0"/><rect x="521" y="243" width="2" height="18" fill="#8a9eb0"/><rect x="523" y="243" width="1" height="18" fill="#6a7ab0"/><rect x="524" y="243" width="4" height="18" fill="#8a9eb0"/><rect x="527" y="243" width="1" height="18" fill="#a08a80"/><rect x="520" y="261" width="1" height="18" fill="#8a9eb0"/><rect x="522" y="261" width="5" height="18" fill="#8a70b0"/><rect x="533.5" y="135" width="399" height="18" fill="#876cae"/><rect x="535" y="153" width="396" height="18" fill="#8a9eb0"/><rect x="931" y="153" width="3" height="18" fill="#7a70a8"/><rect x="535" y="171" width="395" height="18" fill="#756a9a"/><rect x="933" y="135" width="1" height="18" fill="#8a70b0"/><rect x="935" y="135" width="1" height="18" fill="#8a70b0"/><rect x="934" y="153" width="1" height="18" fill="#4a9a90"/><rect x="910" y="189" width="2.5" height="18" fill="#4d9a88"/><rect x="910" y="207" width="1.5" height="18" fill="#8a9eb0"/><rect x="912" y="207" width="1" height="18" fill="#b09070"/><rect x="390" y="285" width="2" height="18" fill="#876cae"/><rect x="390" y="303" width="1" height="18" fill="#8a9eb0"/><rect x="390" y="321" width="1" height="18" fill="#7a6aa8"/><rect x="390" y="339" width="1" height="18" fill="#8a9eb0"/><rect x="390" y="357" width="1" height="18" fill="#7a6aa8"/><rect x="390" y="375" width="1" height="18" fill="#3f9a88"/><rect x="408" y="285" width="2" height="18" fill="#876cae"/><rect x="408" y="303" width="1" height="18" fill="#8a9eb0"/><rect x="408" y="321" width="1" height="18" fill="#7a6aa8"/><rect x="408" y="339" width="1" height="18" fill="#8a9eb0"/><rect x="408" y="357" width="1" height="18" fill="#7a6aa8"/><rect x="408" y="375" width="1" height="18" fill="#3f9a88"/><rect x="432" y="285" width="6" height="18" fill="#876cae"/><rect x="432" y="303" width="6" height="18" fill="#a68a6e"/><rect x="438" y="303" width="1" height="18" fill="#4aa8b0"/><rect x="432.5" y="321" width="3" height="18" fill="#7a6aa8"/><rect x="435.5" y="321" width="2.5" height="18" fill="#8a9eb0"/><rect x="433" y="339" width="1" height="18" fill="#8a9eb0"/><rect x="434" y="339" width="2" height="18" fill="#7a6aa8"/><rect x="433" y="357" width="2" height="18" fill="#7a6aa8"/><rect x="433" y="375" width="1" height="18" fill="#3f9a88"/><rect x="458" y="285" width="5" height="18" fill="#876cae"/><rect x="458" y="303" width="5" height="18" fill="#a68a6e"/><rect x="463" y="303" width="1" height="18" fill="#4aa8b0"/><rect x="458.5" y="321" width="3" height="18" fill="#7a6aa8"/><rect x="461.5" y="321" width="2.5" height="18" fill="#8a9eb0"/><rect x="459" y="339" width="3" height="18" fill="#8a9eb0"/><rect x="459" y="357" width="2" height="18" fill="#7a6aa8"/><rect x="459" y="375" width="1" height="18" fill="#3f9a88"/><rect x="479" y="285" width="5" height="18" fill="#876cae"/><rect x="479" y="303" width="5" height="18" fill="#a68a6e"/><rect x="484" y="303" width="1" height="18" fill="#4aa8b0"/><rect x="479.5" y="321" width="3" height="18" fill="#7a6aa8"/><rect x="482.5" y="321" width="2.5" height="18" fill="#8a9eb0"/><rect x="480" y="339" width="2" height="18" fill="#7a6aa8"/><rect x="482" y="339" width="1" height="18" fill="#8a9eb0"/><rect x="480" y="357" width="2" height="18" fill="#7a6aa8"/><rect x="480" y="375" width="1" height="18" fill="#3f9a88"/><rect x="503" y="285" width="5" height="18" fill="#876cae"/><rect x="503" y="303" width="5" height="18" fill="#a68a6e"/><rect x="508" y="303" width="1" height="18" fill="#4aa8b0"/><rect x="503.5" y="321" width="3" height="18" fill="#7a6aa8"/><rect x="506.5" y="321" width="2.5" height="18" fill="#8a9eb0"/><rect x="504" y="339" width="1" height="18" fill="#8a9eb0"/><rect x="505" y="339" width="2" height="18" fill="#7a6aa8"/><rect x="504" y="357" width="2" height="18" fill="#7a6aa8"/><rect x="504" y="375" width="1" height="18" fill="#3f9a88"/><rect x="527" y="285" width="5" height="18" fill="#876cae"/><rect x="527" y="303" width="5" height="18" fill="#a68a6e"/><rect x="532" y="303" width="1" height="18" fill="#4aa8b0"/><rect x="527.5" y="321" width="3" height="18" fill="#7a6aa8"/><rect x="530.5" y="321" width="2.5" height="18" fill="#8a9eb0"/><rect x="528" y="339" width="3" height="18" fill="#8a9eb0"/><rect x="528" y="357" width="2" height="18" fill="#7a6aa8"/><rect x="528" y="375" width="1" height="18" fill="#3f9a88"/><rect x="550" y="285" width="5" height="18" fill="#876cae"/><rect x="550" y="303" width="5" height="18" fill="#a68a6e"/><rect x="555" y="303" width="1" height="18" fill="#4aa8b0"/><rect x="550.5" y="321" width="3" height="18" fill="#7a6aa8"/><rect x="553.5" y="321" width="2.5" height="18" fill="#8a9eb0"/><rect x="551" y="339" width="2" height="18" fill="#7a6aa8"/><rect x="553" y="339" width="1" height="18" fill="#8a9eb0"/><rect x="551" y="357" width="2" height="18" fill="#7a6aa8"/><rect x="551" y="375" width="1" height="18" fill="#3f9a88"/><rect x="573.7" y="285" width="5" height="18" fill="#876cae"/><rect x="573.7" y="303" width="5" height="18" fill="#a68a6e"/><rect x="578.7" y="303" width="1" height="18" fill="#4aa8b0"/><rect x="574.2" y="321" width="3" height="18" fill="#7a6aa8"/><rect x="577.2" y="321" width="2.5" height="18" fill="#8a9eb0"/><rect x="574.7" y="339" width="1" height="18" fill="#8a9eb0"/><rect x="575.7" y="339" width="2" height="18" fill="#7a6aa8"/><rect x="574.7" y="357" width="2" height="18" fill="#7a6aa8"/><rect x="574.7" y="375" width="1" height="18" fill="#3f9a88"/><rect x="597.8" y="285" width="5" height="18" fill="#876cae"/><rect x="597.8" y="303" width="5" height="18" fill="#a68a6e"/><rect x="602.8" y="303" width="1" height="18" fill="#4aa8b0"/><rect x="598.3" y="321" width="3" height="18" fill="#7a6aa8"/><rect x="601.3" y="321" width="2.5" height="18" fill="#8a9eb0"/><rect x="598.8" y="339" width="3" height="18" fill="#8a9eb0"/><rect x="598.8" y="357" width="2" height="18" fill="#7a6aa8"/><rect x="598.8" y="375" width="1" height="18" fill="#3f9a88"/><rect x="621" y="285" width="5" height="18" fill="#876cae"/><rect x="621" y="303" width="5" height="18" fill="#a68a6e"/><rect x="626" y="303" width="1" height="18" fill="#4aa8b0"/><rect x="621.5" y="321" width="3" height="18" fill="#7a6aa8"/><rect x="624.5" y="321" width="2.5" height="18" fill="#8a9eb0"/><rect x="622" y="339" width="2" height="18" fill="#7a6aa8"/><rect x="624" y="339" width="1" height="18" fill="#8a9eb0"/><rect x="622" y="357" width="2" height="18" fill="#7a6aa8"/><rect x="622" y="375" width="1" height="18" fill="#3f9a88"/><rect x="644.6" y="285" width="5" height="18" fill="#876cae"/><rect x="644.6" y="303" width="5" height="18" fill="#a68a6e"/><rect x="649.6" y="303" width="1" height="18" fill="#4aa8b0"/><rect x="645.1" y="321" width="3" height="18" fill="#7a6aa8"/><rect x="648.1" y="321" width="2.5" height="18" fill="#8a9eb0"/><rect x="645.6" y="339" width="1" height="18" fill="#8a9eb0"/><rect x="646.6" y="339" width="2" height="18" fill="#7a6aa8"/><rect x="645.6" y="357" width="2" height="18" fill="#7a6aa8"/><rect x="645.6" y="375" width="1" height="18" fill="#3f9a88"/><rect x="669" y="285" width="5" height="18" fill="#876cae"/><rect x="669" y="303" width="5" height="18" fill="#a68a6e"/><rect x="674" y="303" width="1" height="18" fill="#4aa8b0"/><rect x="669.5" y="321" width="3" height="18" fill="#7a6aa8"/><rect x="672.5" y="321" width="2.5" height="18" fill="#8a9eb0"/><rect x="670" y="339" width="3" height="18" fill="#8a9eb0"/><rect x="670" y="357" width="2" height="18" fill="#7a6aa8"/><rect x="670" y="375" width="1" height="18" fill="#3f9a88"/><rect x="692" y="285" width="5" height="18" fill="#876cae"/><rect x="692" y="303" width="5" height="18" fill="#a68a6e"/><rect x="697" y="303" width="1" height="18" fill="#4aa8b0"/><rect x="692.5" y="321" width="3" height="18" fill="#7a6aa8"/><rect x="695.5" y="321" width="2.5" height="18" fill="#8a9eb0"/><rect x="693" y="339" width="2" height="18" fill="#7a6aa8"/><rect x="695" y="339" width="1" height="18" fill="#8a9eb0"/><rect x="693" y="357" width="2" height="18" fill="#7a6aa8"/><rect x="693" y="375" width="1" height="18" fill="#3f9a88"/><rect x="716" y="285" width="5" height="18" fill="#876cae"/><rect x="716" y="303" width="5" height="18" fill="#a68a6e"/><rect x="721" y="303" width="1" height="18" fill="#4aa8b0"/><rect x="716.5" y="321" width="3" height="18" fill="#7a6aa8"/><rect x="719.5" y="321" width="2.5" height="18" fill="#8a9eb0"/><rect x="717" y="339" width="1" height="18" fill="#8a9eb0"/><rect x="718" y="339" width="2" height="18" fill="#7a6aa8"/><rect x="717" y="357" width="2" height="18" fill="#7a6aa8"/><rect x="717" y="375" width="1" height="18" fill="#3f9a88"/><rect x="740" y="285" width="5" height="18" fill="#876cae"/><rect x="740" y="303" width="5" height="18" fill="#a68a6e"/><rect x="745" y="303" width="1" height="18" fill="#4aa8b0"/><rect x="740.5" y="321" width="3" height="18" fill="#7a6aa8"/><rect x="743.5" y="321" width="2.5" height="18" fill="#8a9eb0"/><rect x="741" y="339" width="3" height="18" fill="#8a9eb0"/><rect x="741" y="357" width="2" height="18" fill="#7a6aa8"/><rect x="741" y="375" width="1" height="18" fill="#3f9a88"/><rect x="763" y="285" width="5" height="18" fill="#876cae"/><rect x="763" y="303" width="5" height="18" fill="#a68a6e"/><rect x="768" y="303" width="1" height="18" fill="#4aa8b0"/><rect x="763.5" y="321" width="3" height="18" fill="#7a6aa8"/><rect x="766.5" y="321" width="2.5" height="18" fill="#8a9eb0"/><rect x="764" y="339" width="2" height="18" fill="#7a6aa8"/><rect x="766" y="339" width="1" height="18" fill="#8a9eb0"/><rect x="764" y="357" width="2" height="18" fill="#7a6aa8"/><rect x="764" y="375" width="1" height="18" fill="#3f9a88"/><rect x="787" y="285" width="5" height="18" fill="#876cae"/><rect x="787" y="303" width="5" height="18" fill="#a68a6e"/><rect x="792" y="303" width="1" height="18" fill="#4aa8b0"/><rect x="787.5" y="321" width="3" height="18" fill="#7a6aa8"/><rect x="790.5" y="321" width="2.5" height="18" fill="#8a9eb0"/><rect x="788" y="339" width="1" height="18" fill="#8a9eb0"/><rect x="789" y="339" width="2" height="18" fill="#7a6aa8"/><rect x="788" y="357" width="2" height="18" fill="#7a6aa8"/><rect x="788" y="375" width="1" height="18" fill="#3f9a88"/><rect x="811" y="285" width="5" height="18" fill="#876cae"/><rect x="811" y="303" width="5" height="18" fill="#a68a6e"/><rect x="816" y="303" width="1" height="18" fill="#4aa8b0"/><rect x="811.5" y="321" width="3" height="18" fill="#7a6aa8"/><rect x="814.5" y="321" width="2.5" height="18" fill="#8a9eb0"/><rect x="812" y="339" width="3" height="18" fill="#8a9eb0"/><rect x="812" y="357" width="2" height="18" fill="#7a6aa8"/><rect x="812" y="375" width="1" height="18" fill="#3f9a88"/><rect x="834" y="285" width="5" height="18" fill="#876cae"/><rect x="834" y="303" width="5" height="18" fill="#a68a6e"/><rect x="839" y="303" width="1" height="18" fill="#4aa8b0"/><rect x="834.5" y="321" width="3" height="18" fill="#7a6aa8"/><rect x="837.5" y="321" width="2.5" height="18" fill="#8a9eb0"/><rect x="835" y="339" width="2" height="18" fill="#7a6aa8"/><rect x="837" y="339" width="1" height="18" fill="#8a9eb0"/><rect x="835" y="357" width="2" height="18" fill="#7a6aa8"/><rect x="835" y="375" width="1" height="18" fill="#3f9a88"/><rect x="858" y="285" width="5" height="18" fill="#876cae"/><rect x="858" y="303" width="5" height="18" fill="#a68a6e"/><rect x="863" y="303" width="1" height="18" fill="#4aa8b0"/><rect x="858.5" y="321" width="3" height="18" fill="#7a6aa8"/><rect x="861.5" y="321" width="2.5" height="18" fill="#8a9eb0"/><rect x="859" y="339" width="1" height="18" fill="#8a9eb0"/><rect x="860" y="339" width="2" height="18" fill="#7a6aa8"/><rect x="859" y="357" width="2" height="18" fill="#7a6aa8"/><rect x="859" y="375" width="1" height="18" fill="#3f9a88"/><rect x="882" y="285" width="5" height="18" fill="#876cae"/><rect x="882" y="303" width="5" height="18" fill="#a68a6e"/><rect x="887" y="303" width="1" height="18" fill="#4aa8b0"/><rect x="882.5" y="321" width="3" height="18" fill="#7a6aa8"/><rect x="885.5" y="321" width="2.5" height="18" fill="#8a9eb0"/><rect x="883" y="339" width="3" height="18" fill="#8a9eb0"/><rect x="883" y="357" width="2" height="18" fill="#7a6aa8"/><rect x="883" y="375" width="1" height="18" fill="#3f9a88"/><rect x="905" y="285" width="5" height="18" fill="#876cae"/><rect x="905" y="303" width="5" height="18" fill="#a68a6e"/><rect x="910" y="303" width="1" height="18" fill="#4aa8b0"/><rect x="905.5" y="321" width="3" height="18" fill="#7a6aa8"/><rect x="908.5" y="321" width="2.5" height="18" fill="#8a9eb0"/><rect x="906" y="339" width="2" height="18" fill="#7a6aa8"/><rect x="908" y="339" width="1" height="18" fill="#8a9eb0"/><rect x="906" y="357" width="2" height="18" fill="#7a6aa8"/><rect x="906" y="375" width="1" height="18" fill="#3f9a88"/><rect x="929" y="285" width="6" height="18" fill="#876cae"/><rect x="929" y="303" width="6" height="18" fill="#a68a6e"/><rect x="935" y="303" width="1" height="18" fill="#4aa8b0"/><rect x="929.5" y="321" width="3" height="18" fill="#7a6aa8"/><rect x="932.5" y="321" width="2.5" height="18" fill="#8a9eb0"/><rect x="930" y="339" width="1" height="18" fill="#8a9eb0"/><rect x="931" y="339" width="2" height="18" fill="#7a6aa8"/><rect x="930" y="357" width="2" height="18" fill="#7a6aa8"/><rect x="930" y="375" width="1" height="18" fill="#3f9a88"/><rect x="953" y="285" width="5" height="18" fill="#876cae"/><rect x="953" y="303" width="5" height="18" fill="#a68a6e"/><rect x="958" y="303" width="1" height="18" fill="#4aa8b0"/><rect x="953.5" y="321" width="3" height="18" fill="#7a6aa8"/><rect x="956.5" y="321" width="2.5" height="18" fill="#8a9eb0"/><rect x="954" y="339" width="3" height="18" fill="#8a9eb0"/><rect x="954" y="357" width="2" height="18" fill="#7a6aa8"/><rect x="954" y="375" width="1" height="18" fill="#3f9a88"/><rect x="977" y="285" width="5" height="18" fill="#876cae"/><rect x="977" y="303" width="5" height="18" fill="#a68a6e"/><rect x="982" y="303" width="1" height="18" fill="#4aa8b0"/><rect x="977.5" y="321" width="3" height="18" fill="#7a6aa8"/><rect x="980.5" y="321" width="2.5" height="18" fill="#8a9eb0"/><rect x="978" y="339" width="2" height="18" fill="#7a6aa8"/><rect x="980" y="339" width="1" height="18" fill="#8a9eb0"/><rect x="978" y="357" width="2" height="18" fill="#7a6aa8"/><rect x="978" y="375" width="1" height="18" fill="#3f9a88"/><rect x="1000" y="285" width="5" height="18" fill="#876cae"/><rect x="1000" y="303" width="5" height="18" fill="#a68a6e"/><rect x="1005" y="303" width="1" height="18" fill="#4aa8b0"/><rect x="1000.5" y="321" width="3" height="18" fill="#7a6aa8"/><rect x="1003.5" y="321" width="2.5" height="18" fill="#8a9eb0"/><rect x="1001" y="339" width="1" height="18" fill="#8a9eb0"/><rect x="1002" y="339" width="2" height="18" fill="#7a6aa8"/><rect x="1001" y="357" width="2" height="18" fill="#7a6aa8"/><rect x="1001" y="375" width="1" height="18" fill="#3f9a88"/><rect x="1024" y="285" width="5" height="18" fill="#876cae"/><rect x="1024" y="303" width="5" height="18" fill="#a68a6e"/><rect x="1029" y="303" width="1" height="18" fill="#4aa8b0"/><rect x="1024.5" y="321" width="3" height="18" fill="#7a6aa8"/><rect x="1027.5" y="321" width="2.5" height="18" fill="#8a9eb0"/><rect x="1025" y="339" width="3" height="18" fill="#8a9eb0"/><rect x="1025" y="357" width="2" height="18" fill="#7a6aa8"/><rect x="1025" y="375" width="1" height="18" fill="#3f9a88"/><rect x="1047" y="285" width="5" height="18" fill="#876cae"/><rect x="1047" y="303" width="5" height="18" fill="#a68a6e"/><rect x="1052" y="303" width="1" height="18" fill="#4aa8b0"/><rect x="1047.5" y="321" width="3" height="18" fill="#7a6aa8"/><rect x="1050.5" y="321" width="2.5" height="18" fill="#8a9eb0"/><rect x="1048" y="339" width="2" height="18" fill="#7a6aa8"/><rect x="1050" y="339" width="1" height="18" fill="#8a9eb0"/><rect x="1048" y="357" width="2" height="18" fill="#7a6aa8"/><rect x="1048" y="375" width="1" height="18" fill="#3f9a88"/><rect x="1071" y="285" width="5" height="18" fill="#876cae"/><rect x="1071" y="303" width="5" height="18" fill="#a68a6e"/><rect x="1076" y="303" width="1" height="18" fill="#4aa8b0"/><rect x="1071.5" y="321" width="3" height="18" fill="#7a6aa8"/><rect x="1074.5" y="321" width="2.5" height="18" fill="#8a9eb0"/><rect x="1072" y="339" width="1" height="18" fill="#8a9eb0"/><rect x="1073" y="339" width="2" height="18" fill="#7a6aa8"/><rect x="1072" y="357" width="2" height="18" fill="#7a6aa8"/><rect x="1072" y="375" width="1" height="18" fill="#3f9a88"/><rect x="1095" y="285" width="6" height="18" fill="#876cae"/><rect x="1095" y="303" width="6" height="18" fill="#a68a6e"/><rect x="1101" y="303" width="1" height="18" fill="#4aa8b0"/><rect x="1095.5" y="321" width="3" height="18" fill="#7a6aa8"/><rect x="1098.5" y="321" width="2.5" height="18" fill="#8a9eb0"/><rect x="1096" y="339" width="3" height="18" fill="#8a9eb0"/><rect x="1096" y="357" width="2" height="18" fill="#7a6aa8"/><rect x="1096" y="375" width="1" height="18" fill="#3f9a88"/><rect x="1118" y="285" width="5" height="18" fill="#876cae"/><rect x="1118" y="303" width="5" height="18" fill="#a68a6e"/><rect x="1123" y="303" width="1" height="18" fill="#4aa8b0"/><rect x="1118.5" y="321" width="3" height="18" fill="#7a6aa8"/><rect x="1121.5" y="321" width="2.5" height="18" fill="#8a9eb0"/><rect x="1119" y="339" width="2" height="18" fill="#7a6aa8"/><rect x="1121" y="339" width="1" height="18" fill="#8a9eb0"/><rect x="1119" y="357" width="2" height="18" fill="#7a6aa8"/><rect x="1119" y="375" width="1" height="18" fill="#3f9a88"/><rect x="1142" y="285" width="5" height="18" fill="#876cae"/><rect x="1142" y="303" width="5" height="18" fill="#a68a6e"/><rect x="1147" y="303" width="1" height="18" fill="#4aa8b0"/><rect x="1142.5" y="321" width="3" height="18" fill="#7a6aa8"/><rect x="1145.5" y="321" width="2.5" height="18" fill="#8a9eb0"/><rect x="1143" y="339" width="1" height="18" fill="#8a9eb0"/><rect x="1144" y="339" width="2" height="18" fill="#7a6aa8"/><rect x="1143" y="357" width="2" height="18" fill="#7a6aa8"/><rect x="1143" y="375" width="1" height="18" fill="#3f9a88"/><rect x="1166" y="285" width="5" height="18" fill="#876cae"/><rect x="1166" y="303" width="5" height="18" fill="#a68a6e"/><rect x="1171" y="303" width="1" height="18" fill="#4aa8b0"/><rect x="1166.5" y="321" width="3" height="18" fill="#7a6aa8"/><rect x="1169.5" y="321" width="2.5" height="18" fill="#8a9eb0"/><rect x="1167" y="339" width="3" height="18" fill="#8a9eb0"/><rect x="1167" y="357" width="2" height="18" fill="#7a6aa8"/><rect x="1167" y="375" width="1" height="18" fill="#3f9a88"/><rect x="1189" y="285" width="5" height="18" fill="#876cae"/><rect x="1189" y="303" width="5" height="18" fill="#a68a6e"/><rect x="1194" y="303" width="1" height="18" fill="#4aa8b0"/><rect x="1189.5" y="321" width="3" height="18" fill="#7a6aa8"/><rect x="1192.5" y="321" width="2.5" height="18" fill="#8a9eb0"/><rect x="1190" y="339" width="2" height="18" fill="#7a6aa8"/><rect x="1192" y="339" width="1" height="18" fill="#8a9eb0"/><rect x="1190" y="357" width="2" height="18" fill="#7a6aa8"/><rect x="1190" y="375" width="1" height="18" fill="#3f9a88"/><rect x="1213" y="285" width="5" height="18" fill="#876cae"/><rect x="1213" y="303" width="5" height="18" fill="#a68a6e"/><rect x="1218" y="303" width="1" height="18" fill="#4aa8b0"/><rect x="1213.5" y="321" width="3" height="18" fill="#7a6aa8"/><rect x="1216.5" y="321" width="2.5" height="18" fill="#8a9eb0"/><rect x="1214" y="339" width="1" height="18" fill="#8a9eb0"/><rect x="1215" y="339" width="2" height="18" fill="#7a6aa8"/><rect x="1214" y="357" width="2" height="18" fill="#7a6aa8"/><rect x="1214" y="375" width="1" height="18" fill="#3f9a88"/><rect x="1237" y="285" width="5" height="18" fill="#876cae"/><rect x="1237" y="303" width="5" height="18" fill="#a68a6e"/><rect x="1242" y="303" width="1" height="18" fill="#4aa8b0"/><rect x="1237.5" y="321" width="3" height="18" fill="#7a6aa8"/><rect x="1240.5" y="321" width="2.5" height="18" fill="#8a9eb0"/><rect x="1238" y="339" width="3" height="18" fill="#8a9eb0"/><rect x="1238" y="357" width="2" height="18" fill="#7a6aa8"/><rect x="1238" y="375" width="1" height="18" fill="#3f9a88"/><rect x="1260" y="285" width="5" height="18" fill="#876cae"/><rect x="1260" y="303" width="5" height="18" fill="#a68a6e"/><rect x="1265" y="303" width="1" height="18" fill="#4aa8b0"/><rect x="1260.5" y="321" width="3" height="18" fill="#7a6aa8"/><rect x="1263.5" y="321" width="2.5" height="18" fill="#8a9eb0"/><rect x="1261" y="339" width="2" height="18" fill="#7a6aa8"/><rect x="1263" y="339" width="1" height="18" fill="#8a9eb0"/><rect x="1261" y="357" width="2" height="18" fill="#7a6aa8"/><rect x="1261" y="375" width="1" height="18" fill="#3f9a88"/><rect x="1284" y="285" width="5" height="18" fill="#876cae"/><rect x="1284" y="303" width="5" height="18" fill="#a68a6e"/><rect x="1289" y="303" width="1" height="18" fill="#4aa8b0"/><rect x="1284.5" y="321" width="3" height="18" fill="#7a6aa8"/><rect x="1287.5" y="321" width="2.5" height="18" fill="#8a9eb0"/><rect x="1285" y="339" width="1" height="18" fill="#8a9eb0"/><rect x="1286" y="339" width="2" height="18" fill="#7a6aa8"/><rect x="1285" y="357" width="2" height="18" fill="#7a6aa8"/><rect x="1285" y="375" width="1" height="18" fill="#3f9a88"/><rect x="1308" y="285" width="6" height="18" fill="#876cae"/><rect x="1308" y="303" width="6" height="18" fill="#a68a6e"/><rect x="1314" y="303" width="1" height="18" fill="#4aa8b0"/><rect x="1308.5" y="321" width="3" height="18" fill="#7a6aa8"/><rect x="1311.5" y="321" width="2.5" height="18" fill="#8a9eb0"/><rect x="1309" y="339" width="3" height="18" fill="#8a9eb0"/><rect x="1309" y="357" width="2" height="18" fill="#7a6aa8"/><rect x="1309" y="375" width="1" height="18" fill="#3f9a88"/><rect x="1331" y="285" width="5" height="18" fill="#876cae"/><rect x="1331" y="303" width="5" height="18" fill="#a68a6e"/><rect x="1336" y="303" width="1" height="18" fill="#4aa8b0"/><rect x="1331.5" y="321" width="3" height="18" fill="#7a6aa8"/><rect x="1334.5" y="321" width="2.5" height="18" fill="#8a9eb0"/><rect x="1332" y="339" width="2" height="18" fill="#7a6aa8"/><rect x="1334" y="339" width="1" height="18" fill="#8a9eb0"/><rect x="1332" y="357" width="2" height="18" fill="#7a6aa8"/><rect x="1332" y="375" width="1" height="18" fill="#3f9a88"/><rect x="1355" y="285" width="5" height="18" fill="#876cae"/><rect x="1355" y="303" width="5" height="18" fill="#a68a6e"/><rect x="1360" y="303" width="1" height="18" fill="#4aa8b0"/><rect x="1355.5" y="321" width="3" height="18" fill="#7a6aa8"/><rect x="1358.5" y="321" width="2.5" height="18" fill="#8a9eb0"/><rect x="1356" y="339" width="1" height="18" fill="#8a9eb0"/><rect x="1357" y="339" width="2" height="18" fill="#7a6aa8"/><rect x="1356" y="357" width="2" height="18" fill="#7a6aa8"/><rect x="1356" y="375" width="1" height="18" fill="#3f9a88"/><rect x="1379" y="285" width="5" height="18" fill="#876cae"/><rect x="1379" y="303" width="5" height="18" fill="#a68a6e"/><rect x="1384" y="303" width="1" height="18" fill="#4aa8b0"/><rect x="1379.5" y="321" width="3" height="18" fill="#7a6aa8"/><rect x="1382.5" y="321" width="2.5" height="18" fill="#8a9eb0"/><rect x="1380" y="339" width="3" height="18" fill="#8a9eb0"/><rect x="1380" y="357" width="2" height="18" fill="#7a6aa8"/><rect x="1380" y="375" width="1" height="18" fill="#3f9a88"/><rect x="1402" y="285" width="5" height="18" fill="#876cae"/><rect x="1402" y="303" width="5" height="18" fill="#a68a6e"/><rect x="1407" y="303" width="1" height="18" fill="#4aa8b0"/><rect x="1402.5" y="321" width="3" height="18" fill="#7a6aa8"/><rect x="1405.5" y="321" width="2.5" height="18" fill="#8a9eb0"/><rect x="1403" y="339" width="2" height="18" fill="#7a6aa8"/><rect x="1405" y="339" width="1" height="18" fill="#8a9eb0"/><rect x="1403" y="357" width="2" height="18" fill="#7a6aa8"/><rect x="1403" y="375" width="1" height="18" fill="#3f9a88"/><rect x="1426" y="285" width="5" height="18" fill="#876cae"/><rect x="1426" y="303" width="5" height="18" fill="#a68a6e"/><rect x="1431" y="303" width="1" height="18" fill="#4aa8b0"/><rect x="1426.5" y="321" width="3" height="18" fill="#7a6aa8"/><rect x="1429.5" y="321" width="2.5" height="18" fill="#8a9eb0"/><rect x="1427" y="339" width="1" height="18" fill="#8a9eb0"/><rect x="1428" y="339" width="2" height="18" fill="#7a6aa8"/><rect x="1427" y="357" width="2" height="18" fill="#7a6aa8"/><rect x="1427" y="375" width="1" height="18" fill="#3f9a88"/><rect x="1450" y="285" width="5" height="18" fill="#876cae"/><rect x="1450" y="303" width="5" height="18" fill="#a68a6e"/><rect x="1455" y="303" width="1" height="18" fill="#4aa8b0"/><rect x="1450.5" y="321" width="3" height="18" fill="#7a6aa8"/><rect x="1453.5" y="321" width="2.5" height="18" fill="#8a9eb0"/><rect x="1451" y="339" width="3" height="18" fill="#8a9eb0"/><rect x="1451" y="357" width="2" height="18" fill="#7a6aa8"/><rect x="1451" y="375" width="1" height="18" fill="#3f9a88"/><rect x="1473" y="285" width="5" height="18" fill="#876cae"/><rect x="1473" y="303" width="5" height="18" fill="#a68a6e"/><rect x="1478" y="303" width="1" height="18" fill="#4aa8b0"/><rect x="1473.5" y="321" width="3" height="18" fill="#7a6aa8"/><rect x="1476.5" y="321" width="2.5" height="18" fill="#8a9eb0"/><rect x="1474" y="339" width="2" height="18" fill="#7a6aa8"/><rect x="1476" y="339" width="1" height="18" fill="#8a9eb0"/><rect x="1474" y="357" width="2" height="18" fill="#7a6aa8"/><rect x="1474" y="375" width="1" height="18" fill="#3f9a88"/><rect x="1497" y="285" width="5" height="18" fill="#876cae"/><rect x="1497" y="303" width="5" height="18" fill="#a68a6e"/><rect x="1502" y="303" width="1" height="18" fill="#4aa8b0"/><rect x="1497.5" y="321" width="3" height="18" fill="#7a6aa8"/><rect x="1500.5" y="321" width="2.5" height="18" fill="#8a9eb0"/><rect x="1498" y="339" width="1" height="18" fill="#8a9eb0"/><rect x="1499" y="339" width="2" height="18" fill="#7a6aa8"/><rect x="1498" y="357" width="2" height="18" fill="#7a6aa8"/><rect x="1498" y="375" width="1" height="18" fill="#3f9a88"/><rect x="1521" y="285" width="5" height="18" fill="#876cae"/><rect x="1521" y="303" width="5" height="18" fill="#a68a6e"/><rect x="1526" y="303" width="1" height="18" fill="#4aa8b0"/><rect x="1521.5" y="321" width="3" height="18" fill="#7a6aa8"/><rect x="1524.5" y="321" width="2.5" height="18" fill="#8a9eb0"/><rect x="1522" y="339" width="3" height="18" fill="#8a9eb0"/><rect x="1522" y="357" width="2" height="18" fill="#7a6aa8"/><rect x="1522" y="375" width="1" height="18" fill="#3f9a88"/><rect x="1544" y="285" width="5" height="18" fill="#876cae"/><rect x="1544" y="303" width="5" height="18" fill="#a68a6e"/><rect x="1549" y="303" width="1" height="18" fill="#4aa8b0"/><rect x="1544.5" y="321" width="3" height="18" fill="#7a6aa8"/><rect x="1547.5" y="321" width="2.5" height="18" fill="#8a9eb0"/><rect x="1545" y="339" width="2" height="18" fill="#7a6aa8"/><rect x="1547" y="339" width="1" height="18" fill="#8a9eb0"/><rect x="1545" y="357" width="2" height="18" fill="#7a6aa8"/><rect x="1545" y="375" width="1" height="18" fill="#3f9a88"/><rect x="1568" y="285" width="6" height="18" fill="#876cae"/><rect x="1568" y="303" width="6" height="18" fill="#a68a6e"/><rect x="1574" y="303" width="1" height="18" fill="#4aa8b0"/><rect x="1568.5" y="321" width="3" height="18" fill="#7a6aa8"/><rect x="1571.5" y="321" width="2.5" height="18" fill="#8a9eb0"/><rect x="1569" y="339" width="1" height="18" fill="#8a9eb0"/><rect x="1570" y="339" width="2" height="18" fill="#7a6aa8"/><rect x="1569" y="357" width="2" height="18" fill="#7a6aa8"/><rect x="1569" y="375" width="1" height="18" fill="#3f9a88"/><rect x="516.7" y="285" width="3" height="18" fill="#6f86a8"/><rect x="266" y="285" width="6" height="18" fill="#a070f0"/><rect x="266" y="303" width="6" height="18" fill="#e8a878"/><rect x="272" y="303" width="1" height="18" fill="#40c8e0"/><rect x="267.5" y="321" width="2" height="18" fill="#8a6ae0"/><rect x="269.5" y="321" width="2" height="18" fill="#b8d0f0"/><rect x="268" y="339" width="1.5" height="18" fill="#40b0a0"/><rect x="269.5" y="339" width="1.5" height="18" fill="#c0d8f0"/><rect x="268" y="357" width="2" height="18" fill="#6a80d8"/><rect x="268" y="375" width="2" height="18" fill="#4a90c0"/><rect x="1592" y="285" width="5" height="18" fill="#a070f0"/><rect x="1592" y="303" width="5" height="18" fill="#e8a878"/><rect x="1597" y="303" width="1" height="18" fill="#40c8e0"/><rect x="1593" y="321" width="3" height="18" fill="#7a6ae0"/><rect x="1596" y="321" width="2" height="18" fill="#b0c8f0"/><rect x="1593" y="339" width="3" height="18" fill="#b0c8f0"/><rect x="1593" y="357" width="2" height="18" fill="#8a6ae0"/><rect x="1593" y="375" width="1" height="18" fill="#30a080"/><rect x="1612" y="285" width="5" height="18" fill="#a070f0"/><rect x="1612" y="303" width="5" height="18" fill="#e8a878"/><rect x="1617" y="303" width="1" height="18" fill="#40c8e0"/><rect x="1613" y="321" width="3" height="18" fill="#7a6ae0"/><rect x="1616" y="321" width="2" height="18" fill="#b0c8f0"/><rect x="1613" y="339" width="3" height="18" fill="#b0c8f0"/><rect x="1613" y="357" width="2" height="18" fill="#8a6ae0"/><rect x="1613" y="375" width="1" height="18" fill="#30a080"/><rect x="1641" y="285" width="5" height="18" fill="#a070f0"/><rect x="1641" y="303" width="5" height="18" fill="#e8a878"/><rect x="1646" y="303" width="1" height="18" fill="#40c8e0"/><rect x="1642" y="321" width="3" height="18" fill="#7a6ae0"/><rect x="1645" y="321" width="2" height="18" fill="#b0c8f0"/><rect x="1642" y="339" width="3" height="18" fill="#b0c8f0"/><rect x="1642" y="357" width="2" height="18" fill="#8a6ae0"/><rect x="1642" y="375" width="1" height="18" fill="#30a080"/><rect x="309" y="417" width="8" height="18" fill="#8b9eae"/><rect x="309" y="435" width="6" height="18" fill="#7b6ea8"/><rect x="315" y="435" width="2" height="18" fill="#5a8aa8"/><rect x="309" y="453" width="2" height="18" fill="#a88a70"/><rect x="311" y="453" width="4" height="18" fill="#836eaa"/><rect x="316" y="453" width="1" height="18" fill="#7a9ab0"/><rect x="309.5" y="471" width="5" height="18" fill="#7b6ea8"/><rect x="474.9" y="417" width="6" height="18" fill="#8b9eae"/><rect x="474.9" y="435" width="4" height="18" fill="#7b6ea8"/><rect x="478.9" y="435" width="2" height="18" fill="#5a8aa8"/><rect x="474.9" y="453" width="2" height="18" fill="#a88a70"/><rect x="476.9" y="453" width="2" height="18" fill="#836eaa"/><rect x="479.9" y="453" width="1" height="18" fill="#7a9ab0"/><rect x="475.4" y="471" width="3" height="18" fill="#7b6ea8"/><rect x="497" y="417" width="6" height="18" fill="#8b9eae"/><rect x="497" y="435" width="4" height="18" fill="#7b6ea8"/><rect x="501" y="435" width="2" height="18" fill="#5a8aa8"/><rect x="497" y="453" width="2" height="18" fill="#a88a70"/><rect x="499" y="453" width="2" height="18" fill="#836eaa"/><rect x="502" y="453" width="1" height="18" fill="#7a9ab0"/><rect x="497.5" y="471" width="3" height="18" fill="#7b6ea8"/><rect x="523" y="417" width="10" height="18" fill="#8b9eae"/><rect x="523" y="435" width="8" height="18" fill="#7b6ea8"/><rect x="531" y="435" width="2" height="18" fill="#5a8aa8"/><rect x="523" y="453" width="2" height="18" fill="#a88a70"/><rect x="525" y="453" width="6" height="18" fill="#836eaa"/><rect x="532" y="453" width="1" height="18" fill="#7a9ab0"/><rect x="523.5" y="471" width="7" height="18" fill="#7b6ea8"/><rect x="547" y="417" width="10" height="18" fill="#8b9eae"/><rect x="547" y="435" width="8" height="18" fill="#7b6ea8"/><rect x="555" y="435" width="2" height="18" fill="#5a8aa8"/><rect x="547" y="453" width="2" height="18" fill="#a88a70"/><rect x="549" y="453" width="6" height="18" fill="#836eaa"/><rect x="556" y="453" width="1" height="18" fill="#7a9ab0"/><rect x="547.5" y="471" width="7" height="18" fill="#7b6ea8"/><rect x="569" y="417" width="8" height="18" fill="#8b9eae"/><rect x="569" y="435" width="6" height="18" fill="#7b6ea8"/><rect x="575" y="435" width="2" height="18" fill="#5a8aa8"/><rect x="569" y="453" width="2" height="18" fill="#a88a70"/><rect x="571" y="453" width="4" height="18" fill="#836eaa"/><rect x="576" y="453" width="1" height="18" fill="#7a9ab0"/><rect x="569.5" y="471" width="5" height="18" fill="#7b6ea8"/><rect x="592" y="417" width="9" height="18" fill="#8b9eae"/><rect x="592" y="435" width="7" height="18" fill="#7b6ea8"/><rect x="599" y="435" width="2" height="18" fill="#5a8aa8"/><rect x="592" y="453" width="2" height="18" fill="#a88a70"/><rect x="594" y="453" width="5" height="18" fill="#836eaa"/><rect x="600" y="453" width="1" height="18" fill="#7a9ab0"/><rect x="592.5" y="471" width="6" height="18" fill="#7b6ea8"/><rect x="617.8" y="417" width="10" height="18" fill="#8b9eae"/><rect x="617.8" y="435" width="8" height="18" fill="#7b6ea8"/><rect x="625.8" y="435" width="2" height="18" fill="#5a8aa8"/><rect x="617.8" y="453" width="2" height="18" fill="#a88a70"/><rect x="619.8" y="453" width="6" height="18" fill="#836eaa"/><rect x="626.8" y="453" width="1" height="18" fill="#7a9ab0"/><rect x="618.3" y="471" width="7" height="18" fill="#7b6ea8"/><rect x="640" y="417" width="8" height="18" fill="#8b9eae"/><rect x="640" y="435" width="6" height="18" fill="#7b6ea8"/><rect x="646" y="435" width="2" height="18" fill="#5a8aa8"/><rect x="640" y="453" width="2" height="18" fill="#a88a70"/><rect x="642" y="453" width="4" height="18" fill="#836eaa"/><rect x="647" y="453" width="1" height="18" fill="#7a9ab0"/><rect x="640.5" y="471" width="5" height="18" fill="#7b6ea8"/><rect x="663.8" y="417" width="8" height="18" fill="#8b9eae"/><rect x="663.8" y="435" width="6" height="18" fill="#7b6ea8"/><rect x="669.8" y="435" width="2" height="18" fill="#5a8aa8"/><rect x="663.8" y="453" width="2" height="18" fill="#a88a70"/><rect x="665.8" y="453" width="4" height="18" fill="#836eaa"/><rect x="670.8" y="453" width="1" height="18" fill="#7a9ab0"/><rect x="664.3" y="471" width="5" height="18" fill="#7b6ea8"/><rect x="689" y="417" width="9" height="18" fill="#8b9eae"/><rect x="689" y="435" width="7" height="18" fill="#7b6ea8"/><rect x="696" y="435" width="2" height="18" fill="#5a8aa8"/><rect x="689" y="453" width="2" height="18" fill="#a88a70"/><rect x="691" y="453" width="5" height="18" fill="#836eaa"/><rect x="697" y="453" width="1" height="18" fill="#7a9ab0"/><rect x="689.5" y="471" width="6" height="18" fill="#7b6ea8"/><rect x="713" y="417" width="8" height="18" fill="#8b9eae"/><rect x="713" y="435" width="6" height="18" fill="#7b6ea8"/><rect x="719" y="435" width="2" height="18" fill="#5a8aa8"/><rect x="713" y="453" width="2" height="18" fill="#a88a70"/><rect x="715" y="453" width="4" height="18" fill="#836eaa"/><rect x="720" y="453" width="1" height="18" fill="#7a9ab0"/><rect x="713.5" y="471" width="5" height="18" fill="#7b6ea8"/><rect x="734" y="417" width="8" height="18" fill="#8b9eae"/><rect x="734" y="435" width="6" height="18" fill="#7b6ea8"/><rect x="740" y="435" width="2" height="18" fill="#5a8aa8"/><rect x="734" y="453" width="2" height="18" fill="#a88a70"/><rect x="736" y="453" width="4" height="18" fill="#836eaa"/><rect x="741" y="453" width="1" height="18" fill="#7a9ab0"/><rect x="734.5" y="471" width="5" height="18" fill="#7b6ea8"/><rect x="760" y="417" width="7" height="18" fill="#8b9eae"/><rect x="760" y="435" width="5" height="18" fill="#7b6ea8"/><rect x="765" y="435" width="2" height="18" fill="#5a8aa8"/><rect x="760" y="453" width="2" height="18" fill="#a88a70"/><rect x="762" y="453" width="3" height="18" fill="#836eaa"/><rect x="766" y="453" width="1" height="18" fill="#7a9ab0"/><rect x="760.5" y="471" width="4" height="18" fill="#7b6ea8"/><rect x="781" y="417" width="8" height="18" fill="#8b9eae"/><rect x="781" y="435" width="6" height="18" fill="#7b6ea8"/><rect x="787" y="435" width="2" height="18" fill="#5a8aa8"/><rect x="781" y="453" width="2" height="18" fill="#a88a70"/><rect x="783" y="453" width="4" height="18" fill="#836eaa"/><rect x="788" y="453" width="1" height="18" fill="#7a9ab0"/><rect x="781.5" y="471" width="5" height="18" fill="#7b6ea8"/><rect x="807" y="417" width="7" height="18" fill="#8b9eae"/><rect x="807" y="435" width="5" height="18" fill="#7b6ea8"/><rect x="812" y="435" width="2" height="18" fill="#5a8aa8"/><rect x="807" y="453" width="2" height="18" fill="#a88a70"/><rect x="809" y="453" width="3" height="18" fill="#836eaa"/><rect x="813" y="453" width="1" height="18" fill="#7a9ab0"/><rect x="807.5" y="471" width="4" height="18" fill="#7b6ea8"/><rect x="829.3" y="417" width="9" height="18" fill="#8b9eae"/><rect x="829.3" y="435" width="7" height="18" fill="#7b6ea8"/><rect x="836.3" y="435" width="2" height="18" fill="#5a8aa8"/><rect x="829.3" y="453" width="2" height="18" fill="#a88a70"/><rect x="831.3" y="453" width="5" height="18" fill="#836eaa"/><rect x="837.3" y="453" width="1" height="18" fill="#7a9ab0"/><rect x="829.8" y="471" width="6" height="18" fill="#7b6ea8"/><rect x="853" y="417" width="8" height="18" fill="#8b9eae"/><rect x="853" y="435" width="6" height="18" fill="#7b6ea8"/><rect x="859" y="435" width="2" height="18" fill="#5a8aa8"/><rect x="853" y="453" width="2" height="18" fill="#a88a70"/><rect x="855" y="453" width="4" height="18" fill="#836eaa"/><rect x="860" y="453" width="1" height="18" fill="#7a9ab0"/><rect x="853.5" y="471" width="5" height="18" fill="#7b6ea8"/><rect x="876" y="417" width="8" height="18" fill="#8b9eae"/><rect x="876" y="435" width="6" height="18" fill="#7b6ea8"/><rect x="882" y="435" width="2" height="18" fill="#5a8aa8"/><rect x="876" y="453" width="2" height="18" fill="#a88a70"/><rect x="878" y="453" width="4" height="18" fill="#836eaa"/><rect x="883" y="453" width="1" height="18" fill="#7a9ab0"/><rect x="876.5" y="471" width="5" height="18" fill="#7b6ea8"/><rect x="899" y="417" width="10" height="18" fill="#8b9eae"/><rect x="899" y="435" width="8" height="18" fill="#7b6ea8"/><rect x="907" y="435" width="2" height="18" fill="#5a8aa8"/><rect x="899" y="453" width="2" height="18" fill="#a88a70"/><rect x="901" y="453" width="6" height="18" fill="#836eaa"/><rect x="908" y="453" width="1" height="18" fill="#7a9ab0"/><rect x="899.5" y="471" width="7" height="18" fill="#7b6ea8"/><rect x="924" y="417" width="12" height="18" fill="#8b9eae"/><rect x="924" y="435" width="10" height="18" fill="#7b6ea8"/><rect x="934" y="435" width="2" height="18" fill="#5a8aa8"/><rect x="924" y="453" width="2" height="18" fill="#a88a70"/><rect x="926" y="453" width="8" height="18" fill="#836eaa"/><rect x="935" y="453" width="1" height="18" fill="#7a9ab0"/><rect x="924.5" y="471" width="9" height="18" fill="#7b6ea8"/><rect x="948" y="417" width="10" height="18" fill="#8b9eae"/><rect x="948" y="435" width="8" height="18" fill="#7b6ea8"/><rect x="956" y="435" width="2" height="18" fill="#5a8aa8"/><rect x="948" y="453" width="2" height="18" fill="#a88a70"/><rect x="950" y="453" width="6" height="18" fill="#836eaa"/><rect x="957" y="453" width="1" height="18" fill="#7a9ab0"/><rect x="948.5" y="471" width="7" height="18" fill="#7b6ea8"/><rect x="973.3" y="417" width="10" height="18" fill="#8b9eae"/><rect x="973.3" y="435" width="8" height="18" fill="#7b6ea8"/><rect x="981.3" y="435" width="2" height="18" fill="#5a8aa8"/><rect x="973.3" y="453" width="2" height="18" fill="#a88a70"/><rect x="975.3" y="453" width="6" height="18" fill="#836eaa"/><rect x="982.3" y="453" width="1" height="18" fill="#7a9ab0"/><rect x="973.8" y="471" width="7" height="18" fill="#7b6ea8"/><rect x="997" y="417" width="12" height="18" fill="#8b9eae"/><rect x="997" y="435" width="10" height="18" fill="#7b6ea8"/><rect x="1007" y="435" width="2" height="18" fill="#5a8aa8"/><rect x="997" y="453" width="2" height="18" fill="#a88a70"/><rect x="999" y="453" width="8" height="18" fill="#836eaa"/><rect x="1008" y="453" width="1" height="18" fill="#7a9ab0"/><rect x="997.5" y="471" width="9" height="18" fill="#7b6ea8"/><rect x="1020" y="417" width="9" height="18" fill="#8b9eae"/><rect x="1020" y="435" width="7" height="18" fill="#7b6ea8"/><rect x="1027" y="435" width="2" height="18" fill="#5a8aa8"/><rect x="1020" y="453" width="2" height="18" fill="#a88a70"/><rect x="1022" y="453" width="5" height="18" fill="#836eaa"/><rect x="1028" y="453" width="1" height="18" fill="#7a9ab0"/><rect x="1020.5" y="471" width="6" height="18" fill="#7b6ea8"/><rect x="1043" y="417" width="10" height="18" fill="#8b9eae"/><rect x="1043" y="435" width="8" height="18" fill="#7b6ea8"/><rect x="1051" y="435" width="2" height="18" fill="#5a8aa8"/><rect x="1043" y="453" width="2" height="18" fill="#a88a70"/><rect x="1045" y="453" width="6" height="18" fill="#836eaa"/><rect x="1052" y="453" width="1" height="18" fill="#7a9ab0"/><rect x="1043.5" y="471" width="7" height="18" fill="#7b6ea8"/><rect x="1067" y="417" width="8" height="18" fill="#8b9eae"/><rect x="1067" y="435" width="6" height="18" fill="#7b6ea8"/><rect x="1073" y="435" width="2" height="18" fill="#5a8aa8"/><rect x="1067" y="453" width="2" height="18" fill="#a88a70"/><rect x="1069" y="453" width="4" height="18" fill="#836eaa"/><rect x="1074" y="453" width="1" height="18" fill="#7a9ab0"/><rect x="1067.5" y="471" width="5" height="18" fill="#7b6ea8"/><rect x="1091" y="417" width="10" height="18" fill="#8b9eae"/><rect x="1091" y="435" width="8" height="18" fill="#7b6ea8"/><rect x="1099" y="435" width="2" height="18" fill="#5a8aa8"/><rect x="1091" y="453" width="2" height="18" fill="#a88a70"/><rect x="1093" y="453" width="6" height="18" fill="#836eaa"/><rect x="1100" y="453" width="1" height="18" fill="#7a9ab0"/><rect x="1091.5" y="471" width="7" height="18" fill="#7b6ea8"/><rect x="1114" y="417" width="7" height="18" fill="#8b9eae"/><rect x="1114" y="435" width="5" height="18" fill="#7b6ea8"/><rect x="1119" y="435" width="2" height="18" fill="#5a8aa8"/><rect x="1114" y="453" width="2" height="18" fill="#a88a70"/><rect x="1116" y="453" width="3" height="18" fill="#836eaa"/><rect x="1120" y="453" width="1" height="18" fill="#7a9ab0"/><rect x="1114.5" y="471" width="4" height="18" fill="#7b6ea8"/><rect x="1137" y="417" width="7" height="18" fill="#8b9eae"/><rect x="1137" y="435" width="5" height="18" fill="#7b6ea8"/><rect x="1142" y="435" width="2" height="18" fill="#5a8aa8"/><rect x="1137" y="453" width="2" height="18" fill="#a88a70"/><rect x="1139" y="453" width="3" height="18" fill="#836eaa"/><rect x="1143" y="453" width="1" height="18" fill="#7a9ab0"/><rect x="1137.5" y="471" width="4" height="18" fill="#7b6ea8"/><rect x="1161" y="417" width="7" height="18" fill="#8b9eae"/><rect x="1161" y="435" width="5" height="18" fill="#7b6ea8"/><rect x="1166" y="435" width="2" height="18" fill="#5a8aa8"/><rect x="1161" y="453" width="2" height="18" fill="#a88a70"/><rect x="1163" y="453" width="3" height="18" fill="#836eaa"/><rect x="1167" y="453" width="1" height="18" fill="#7a9ab0"/><rect x="1161.5" y="471" width="4" height="18" fill="#7b6ea8"/><rect x="1185" y="417" width="7" height="18" fill="#8b9eae"/><rect x="1185" y="435" width="5" height="18" fill="#7b6ea8"/><rect x="1190" y="435" width="2" height="18" fill="#5a8aa8"/><rect x="1185" y="453" width="2" height="18" fill="#a88a70"/><rect x="1187" y="453" width="3" height="18" fill="#836eaa"/><rect x="1191" y="453" width="1" height="18" fill="#7a9ab0"/><rect x="1185.5" y="471" width="4" height="18" fill="#7b6ea8"/><rect x="1208" y="417" width="8" height="18" fill="#8b9eae"/><rect x="1208" y="435" width="6" height="18" fill="#7b6ea8"/><rect x="1214" y="435" width="2" height="18" fill="#5a8aa8"/><rect x="1208" y="453" width="2" height="18" fill="#a88a70"/><rect x="1210" y="453" width="4" height="18" fill="#836eaa"/><rect x="1215" y="453" width="1" height="18" fill="#7a9ab0"/><rect x="1208.5" y="471" width="5" height="18" fill="#7b6ea8"/><rect x="1233" y="417" width="9" height="18" fill="#8b9eae"/><rect x="1233" y="435" width="7" height="18" fill="#7b6ea8"/><rect x="1240" y="435" width="2" height="18" fill="#5a8aa8"/><rect x="1233" y="453" width="2" height="18" fill="#a88a70"/><rect x="1235" y="453" width="5" height="18" fill="#836eaa"/><rect x="1241" y="453" width="1" height="18" fill="#7a9ab0"/><rect x="1233.5" y="471" width="6" height="18" fill="#7b6ea8"/><rect x="1256" y="417" width="7" height="18" fill="#8b9eae"/><rect x="1256" y="435" width="5" height="18" fill="#7b6ea8"/><rect x="1261" y="435" width="2" height="18" fill="#5a8aa8"/><rect x="1256" y="453" width="2" height="18" fill="#a88a70"/><rect x="1258" y="453" width="3" height="18" fill="#836eaa"/><rect x="1262" y="453" width="1" height="18" fill="#7a9ab0"/><rect x="1256.5" y="471" width="4" height="18" fill="#7b6ea8"/><rect x="1279" y="417" width="9" height="18" fill="#8b9eae"/><rect x="1279" y="435" width="7" height="18" fill="#7b6ea8"/><rect x="1286" y="435" width="2" height="18" fill="#5a8aa8"/><rect x="1279" y="453" width="2" height="18" fill="#a88a70"/><rect x="1281" y="453" width="5" height="18" fill="#836eaa"/><rect x="1287" y="453" width="1" height="18" fill="#7a9ab0"/><rect x="1279.5" y="471" width="6" height="18" fill="#7b6ea8"/><rect x="1304" y="417" width="9" height="18" fill="#8b9eae"/><rect x="1304" y="435" width="7" height="18" fill="#7b6ea8"/><rect x="1311" y="435" width="2" height="18" fill="#5a8aa8"/><rect x="1304" y="453" width="2" height="18" fill="#a88a70"/><rect x="1306" y="453" width="5" height="18" fill="#836eaa"/><rect x="1312" y="453" width="1" height="18" fill="#7a9ab0"/><rect x="1304.5" y="471" width="6" height="18" fill="#7b6ea8"/><rect x="1327" y="417" width="8" height="18" fill="#8b9eae"/><rect x="1327" y="435" width="6" height="18" fill="#7b6ea8"/><rect x="1333" y="435" width="2" height="18" fill="#5a8aa8"/><rect x="1327" y="453" width="2" height="18" fill="#a88a70"/><rect x="1329" y="453" width="4" height="18" fill="#836eaa"/><rect x="1334" y="453" width="1" height="18" fill="#7a9ab0"/><rect x="1327.5" y="471" width="5" height="18" fill="#7b6ea8"/><rect x="1350" y="417" width="7" height="18" fill="#8b9eae"/><rect x="1350" y="435" width="5" height="18" fill="#7b6ea8"/><rect x="1355" y="435" width="2" height="18" fill="#5a8aa8"/><rect x="1350" y="453" width="2" height="18" fill="#a88a70"/><rect x="1352" y="453" width="3" height="18" fill="#836eaa"/><rect x="1356" y="453" width="1" height="18" fill="#7a9ab0"/><rect x="1350.5" y="471" width="4" height="18" fill="#7b6ea8"/><rect x="1373" y="417" width="6" height="18" fill="#8b9eae"/><rect x="1373" y="435" width="4" height="18" fill="#7b6ea8"/><rect x="1377" y="435" width="2" height="18" fill="#5a8aa8"/><rect x="1373" y="453" width="2" height="18" fill="#a88a70"/><rect x="1375" y="453" width="2" height="18" fill="#836eaa"/><rect x="1378" y="453" width="1" height="18" fill="#7a9ab0"/><rect x="1373.5" y="471" width="3" height="18" fill="#7b6ea8"/><rect x="1398" y="417" width="7" height="18" fill="#8b9eae"/><rect x="1398" y="435" width="5" height="18" fill="#7b6ea8"/><rect x="1403" y="435" width="2" height="18" fill="#5a8aa8"/><rect x="1398" y="453" width="2" height="18" fill="#a88a70"/><rect x="1400" y="453" width="3" height="18" fill="#836eaa"/><rect x="1404" y="453" width="1" height="18" fill="#7a9ab0"/><rect x="1398.5" y="471" width="4" height="18" fill="#7b6ea8"/><rect x="1420" y="417" width="6" height="18" fill="#8b9eae"/><rect x="1420" y="435" width="4" height="18" fill="#7b6ea8"/><rect x="1424" y="435" width="2" height="18" fill="#5a8aa8"/><rect x="1420" y="453" width="2" height="18" fill="#a88a70"/><rect x="1422" y="453" width="2" height="18" fill="#836eaa"/><rect x="1425" y="453" width="1" height="18" fill="#7a9ab0"/><rect x="1420.5" y="471" width="3" height="18" fill="#7b6ea8"/><rect x="1446" y="417" width="7" height="18" fill="#8b9eae"/><rect x="1446" y="435" width="5" height="18" fill="#7b6ea8"/><rect x="1451" y="435" width="2" height="18" fill="#5a8aa8"/><rect x="1446" y="453" width="2" height="18" fill="#a88a70"/><rect x="1448" y="453" width="3" height="18" fill="#836eaa"/><rect x="1452" y="453" width="1" height="18" fill="#7a9ab0"/><rect x="1446.5" y="471" width="4" height="18" fill="#7b6ea8"/><rect x="1469" y="417" width="7" height="18" fill="#8b9eae"/><rect x="1469" y="435" width="5" height="18" fill="#7b6ea8"/><rect x="1474" y="435" width="2" height="18" fill="#5a8aa8"/><rect x="1469" y="453" width="2" height="18" fill="#a88a70"/><rect x="1471" y="453" width="3" height="18" fill="#836eaa"/><rect x="1475" y="453" width="1" height="18" fill="#7a9ab0"/><rect x="1469.5" y="471" width="4" height="18" fill="#7b6ea8"/><rect x="1492" y="417" width="9" height="18" fill="#8b9eae"/><rect x="1492" y="435" width="7" height="18" fill="#7b6ea8"/><rect x="1499" y="435" width="2" height="18" fill="#5a8aa8"/><rect x="1492" y="453" width="2" height="18" fill="#a88a70"/><rect x="1494" y="453" width="5" height="18" fill="#836eaa"/><rect x="1500" y="453" width="1" height="18" fill="#7a9ab0"/><rect x="1492.5" y="471" width="6" height="18" fill="#7b6ea8"/><rect x="1516" y="417" width="6" height="18" fill="#8b9eae"/><rect x="1516" y="435" width="4" height="18" fill="#7b6ea8"/><rect x="1520" y="435" width="2" height="18" fill="#5a8aa8"/><rect x="1516" y="453" width="2" height="18" fill="#a88a70"/><rect x="1518" y="453" width="2" height="18" fill="#836eaa"/><rect x="1521" y="453" width="1" height="18" fill="#7a9ab0"/><rect x="1516.5" y="471" width="3" height="18" fill="#7b6ea8"/><rect x="1539" y="417" width="10" height="18" fill="#8b9eae"/><rect x="1539" y="435" width="8" height="18" fill="#7b6ea8"/><rect x="1547" y="435" width="2" height="18" fill="#5a8aa8"/><rect x="1539" y="453" width="2" height="18" fill="#a88a70"/><rect x="1541" y="453" width="6" height="18" fill="#836eaa"/><rect x="1548" y="453" width="1" height="18" fill="#7a9ab0"/><rect x="1539.5" y="471" width="7" height="18" fill="#7b6ea8"/><rect x="1563" y="417" width="11" height="18" fill="#8b9eae"/><rect x="1563" y="435" width="9" height="18" fill="#7b6ea8"/><rect x="1572" y="435" width="2" height="18" fill="#5a8aa8"/><rect x="1563" y="453" width="2" height="18" fill="#a88a70"/><rect x="1565" y="453" width="7" height="18" fill="#836eaa"/><rect x="1573" y="453" width="1" height="18" fill="#7a9ab0"/><rect x="1563.5" y="471" width="8" height="18" fill="#7b6ea8"/><rect x="382" y="417" width="1.2" height="36" fill="#7a6aa8"/><rect x="1586.3" y="417" width="9" height="18" fill="#a8c8f0"/><rect x="1586.3" y="435" width="7" height="18" fill="#8a6ee0"/><rect x="1593.3" y="435" width="1" height="18" fill="#40c8e0"/><rect x="1586.3" y="453" width="2" height="18" fill="#e8a878"/><rect x="1588.3" y="453" width="5" height="18" fill="#a070f0"/><rect x="1586.8" y="471" width="6" height="18" fill="#8a6ee0"/><rect x="1611" y="417" width="8" height="18" fill="#a8c8f0"/><rect x="1611" y="435" width="6" height="18" fill="#8a6ee0"/><rect x="1617" y="435" width="1" height="18" fill="#40c8e0"/><rect x="1611" y="453" width="2" height="18" fill="#e8a878"/><rect x="1613" y="453" width="4" height="18" fill="#a070f0"/><rect x="1611.5" y="471" width="5" height="18" fill="#8a6ee0"/><rect x="1635" y="417" width="8" height="18" fill="#a8c8f0"/><rect x="1635" y="435" width="6" height="18" fill="#8a6ee0"/><rect x="1641" y="435" width="1" height="18" fill="#40c8e0"/><rect x="1635" y="453" width="2" height="18" fill="#e8a878"/><rect x="1637" y="453" width="4" height="18" fill="#a070f0"/><rect x="1635.5" y="471" width="5" height="18" fill="#8a6ee0"/><rect x="426" y="492" width="13" height="18" fill="#b46a48"/><rect x="1587" y="492" width="9" height="18" fill="#3a9a4a"/><rect x="1611" y="492" width="5" height="18" fill="#3a9a4a"/><rect x="1635" y="492" width="11" height="18" fill="#f26a20"/><rect x="248" y="530.6" width="4" height="1.6" fill="#a0a0a0"/><rect x="252" y="530.6" width="14" height="1.6" fill="#a0a0a0"/><rect x="266" y="530.6" width="9" height="1.6" fill="#a0a0a0"/><rect x="275" y="530.6" width="9" height="1.6" fill="#9a8ac8"/><rect x="284" y="530.6" width="3" height="1.6" fill="#a0a0a0"/><rect x="287" y="530.6" width="6" height="1.6" fill="#a0a0a0"/><rect x="293" y="530.6" width="3" height="1.6" fill="#8a70b0"/><rect x="296" y="530.6" width="9" height="1.6" fill="#8a9eb0"/><rect x="305" y="530.6" width="2" height="1.6" fill="#7a6aa8"/><rect x="307" y="530.6" width="9" height="1.6" fill="#8a70b0"/><rect x="316" y="530.6" width="3" height="1.6" fill="#a2a2a2"/><rect x="319" y="530.6" width="14" height="1.6" fill="#a2a2a2"/><rect x="333" y="530.6" width="2" height="1.6" fill="#a2a2a2"/><rect x="335" y="530.6" width="9" height="1.6" fill="#8a9eb0"/><rect x="344" y="530.6" width="2" height="1.6" fill="#a68a6e"/><rect x="346" y="530.6" width="2" height="1.6" fill="#a2a2a2"/><rect x="348" y="530.6" width="3" height="1.6" fill="#5e9a94"/><rect x="351" y="530.6" width="6" height="1.6" fill="#a68a6e"/><rect x="357" y="530.6" width="9" height="1.6" fill="#8a70b0"/><rect x="366" y="530.6" width="9" height="1.6" fill="#5e9a94"/><rect x="375" y="530.6" width="9" height="1.6" fill="#7a6aa8"/><rect x="384" y="530.6" width="14" height="1.6" fill="#a68a6e"/><rect x="398" y="530.6" width="2" height="1.6" fill="#a2a2a2"/><rect x="400" y="530.6" width="9" height="1.6" fill="#a2a2a2"/><rect x="409" y="530.6" width="3" height="1.6" fill="#5e9a94"/><rect x="412" y="530.6" width="2" height="1.6" fill="#a2a2a2"/><rect x="414" y="530.6" width="14" height="1.6" fill="#8a70b0"/><rect x="428" y="530.6" width="9" height="1.6" fill="#8a70b0"/><rect x="437" y="530.6" width="9" height="1.6" fill="#a68a6e"/><rect x="446" y="530.6" width="6" height="1.6" fill="#a2a2a2"/><rect x="452" y="530.6" width="9" height="1.6" fill="#8a9eb0"/><rect x="461" y="530.6" width="4" height="1.6" fill="#8a9eb0"/><rect x="465" y="530.6" width="9" height="1.6" fill="#8a9eb0"/><rect x="474" y="530.6" width="4" height="1.6" fill="#5e9a94"/><rect x="478" y="530.6" width="3" height="1.6" fill="#7a6aa8"/><rect x="481" y="530.6" width="3" height="1.6" fill="#a2a2a2"/><rect x="484" y="530.6" width="3" height="1.6" fill="#8a70b0"/><rect x="487" y="530.6" width="9" height="1.6" fill="#5e9a94"/><rect x="496" y="530.6" width="9" height="1.6" fill="#8a9eb0"/><rect x="505" y="530.6" width="4" height="1.6" fill="#a2a2a2"/><rect x="509" y="530.6" width="6" height="1.6" fill="#5e9a94"/><rect x="515" y="530.6" width="9" height="1.6" fill="#8a70b0"/><rect x="524" y="530.6" width="2" height="1.6" fill="#a2a2a2"/><rect x="526" y="530.6" width="6" height="1.6" fill="#a68a6e"/><rect x="532" y="530.6" width="4" height="1.6" fill="#a68a6e"/><rect x="536" y="530.6" width="6" height="1.6" fill="#8a9eb0"/><rect x="542" y="530.6" width="2" height="1.6" fill="#a2a2a2"/><rect x="544" y="530.6" width="2" height="1.6" fill="#7a6aa8"/><rect x="546" y="530.6" width="9" height="1.6" fill="#a2a2a2"/><rect x="555" y="530.6" width="4" height="1.6" fill="#5e9a94"/><rect x="559" y="530.6" width="14" height="1.6" fill="#5e9a94"/><rect x="573" y="530.6" width="9" height="1.6" fill="#8a9eb0"/><rect x="582" y="530.6" width="9" height="1.6" fill="#7a6aa8"/><rect x="591" y="530.6" width="6" height="1.6" fill="#8a70b0"/><rect x="597" y="530.6" width="2" height="1.6" fill="#5e9a94"/><rect x="599" y="530.6" width="6" height="1.6" fill="#a2a2a2"/><rect x="605" y="530.6" width="14" height="1.6" fill="#8a70b0"/><rect x="619" y="530.6" width="2" height="1.6" fill="#a2a2a2"/><rect x="621" y="530.6" width="14" height="1.6" fill="#5e9a94"/><rect x="635" y="530.6" width="14" height="1.6" fill="#a2a2a2"/><rect x="649" y="530.6" width="14" height="1.6" fill="#7a6aa8"/><rect x="663" y="530.6" width="6" height="1.6" fill="#5e9a94"/><rect x="669" y="530.6" width="14" height="1.6" fill="#8a9eb0"/><rect x="683" y="530.6" width="14" height="1.6" fill="#5e9a94"/><rect x="697" y="530.6" width="2" height="1.6" fill="#8a9eb0"/><rect x="699" y="530.6" width="4" height="1.6" fill="#a68a6e"/><rect x="703" y="530.6" width="9" height="1.6" fill="#8a70b0"/><rect x="712" y="530.6" width="6" height="1.6" fill="#8a70b0"/><rect x="718" y="530.6" width="3" height="1.6" fill="#7a6aa8"/><rect x="721" y="530.6" width="4" height="1.6" fill="#a68a6e"/><rect x="725" y="530.6" width="14" height="1.6" fill="#a68a6e"/><rect x="739" y="530.6" width="6" height="1.6" fill="#8a9eb0"/><rect x="745" y="530.6" width="6" height="1.6" fill="#8a70b0"/><rect x="751" y="530.6" width="3" height="1.6" fill="#8a9eb0"/><rect x="754" y="530.6" width="6" height="1.6" fill="#a2a2a2"/><rect x="760" y="530.6" width="4" height="1.6" fill="#a68a6e"/><rect x="764" y="530.6" width="6" height="1.6" fill="#7a6aa8"/><rect x="770" y="530.6" width="9" height="1.6" fill="#5e9a94"/><rect x="779" y="530.6" width="14" height="1.6" fill="#8a9eb0"/><rect x="793" y="530.6" width="4" height="1.6" fill="#a2a2a2"/><rect x="797" y="530.6" width="6" height="1.6" fill="#a68a6e"/><rect x="803" y="530.6" width="3" height="1.6" fill="#8a70b0"/><rect x="806" y="530.6" width="3" height="1.6" fill="#a68a6e"/><rect x="809" y="530.6" width="3" height="1.6" fill="#a2a2a2"/><rect x="812" y="530.6" width="3" height="1.6" fill="#8a70b0"/><rect x="815" y="530.6" width="6" height="1.6" fill="#7a6aa8"/><rect x="821" y="530.6" width="9" height="1.6" fill="#a68a6e"/><rect x="830" y="530.6" width="4" height="1.6" fill="#5e9a94"/><rect x="834" y="530.6" width="2" height="1.6" fill="#a68a6e"/><rect x="836" y="530.6" width="6" height="1.6" fill="#a2a2a2"/><rect x="842" y="530.6" width="4" height="1.6" fill="#a2a2a2"/><rect x="846" y="530.6" width="9" height="1.6" fill="#5e9a94"/><rect x="855" y="530.6" width="3" height="1.6" fill="#a2a2a2"/><rect x="858" y="530.6" width="9" height="1.6" fill="#a2a2a2"/><rect x="867" y="530.6" width="14" height="1.6" fill="#a2a2a2"/><rect x="881" y="530.6" width="14" height="1.6" fill="#8a70b0"/><rect x="895" y="530.6" width="6" height="1.6" fill="#7a6aa8"/><rect x="901" y="530.6" width="14" height="1.6" fill="#7a6aa8"/><rect x="915" y="530.6" width="9" height="1.6" fill="#8a9eb0"/><rect x="924" y="530.6" width="6" height="1.6" fill="#8a9eb0"/><rect x="930" y="530.6" width="6" height="1.6" fill="#8a70b0"/><rect x="936" y="530.6" width="6" height="1.6" fill="#a2a2a2"/><rect x="942" y="530.6" width="6" height="1.6" fill="#8a70b0"/><rect x="948" y="530.6" width="3" height="1.6" fill="#8a70b0"/><rect x="951" y="530.6" width="3" height="1.6" fill="#8a9eb0"/><rect x="954" y="530.6" width="3" height="1.6" fill="#8a70b0"/><rect x="957" y="530.6" width="4" height="1.6" fill="#a2a2a2"/><rect x="961" y="530.6" width="2" height="1.6" fill="#8a70b0"/><rect x="963" y="530.6" width="2" height="1.6" fill="#a2a2a2"/><rect x="965" y="530.6" width="3" height="1.6" fill="#a2a2a2"/><rect x="968" y="530.6" width="2" height="1.6" fill="#5e9a94"/><rect x="970" y="530.6" width="9" height="1.6" fill="#8a70b0"/><rect x="979" y="530.6" width="2" height="1.6" fill="#7a6aa8"/><rect x="981" y="530.6" width="3" height="1.6" fill="#a2a2a2"/><rect x="984" y="530.6" width="6" height="1.6" fill="#a68a6e"/><rect x="990" y="530.6" width="14" height="1.6" fill="#5e9a94"/><rect x="1004" y="530.6" width="4" height="1.6" fill="#a2a2a2"/><rect x="1008" y="530.6" width="4" height="1.6" fill="#8a9eb0"/><rect x="1012" y="530.6" width="2" height="1.6" fill="#8a70b0"/><rect x="1014" y="530.6" width="6" height="1.6" fill="#8a9eb0"/><rect x="1020" y="530.6" width="6" height="1.6" fill="#8a9eb0"/><rect x="1026" y="530.6" width="4" height="1.6" fill="#8a70b0"/><rect x="1030" y="530.6" width="3" height="1.6" fill="#8a70b0"/><rect x="1033" y="530.6" width="14" height="1.6" fill="#5e9a94"/><rect x="1047" y="530.6" width="14" height="1.6" fill="#5e9a94"/><rect x="1061" y="530.6" width="6" height="1.6" fill="#7a6aa8"/><rect x="1067" y="530.6" width="14" height="1.6" fill="#a68a6e"/><rect x="1081" y="530.6" width="9" height="1.6" fill="#8a70b0"/><rect x="1090" y="530.6" width="3" height="1.6" fill="#a2a2a2"/><rect x="1093" y="530.6" width="4" height="1.6" fill="#a68a6e"/><rect x="1097" y="530.6" width="14" height="1.6" fill="#a2a2a2"/><rect x="1111" y="530.6" width="2" height="1.6" fill="#7a6aa8"/><rect x="1113" y="530.6" width="9" height="1.6" fill="#5e9a94"/><rect x="1122" y="530.6" width="14" height="1.6" fill="#7a6aa8"/><rect x="1136" y="530.6" width="2" height="1.6" fill="#a2a2a2"/><rect x="1138" y="530.6" width="4" height="1.6" fill="#a2a2a2"/><rect x="1142" y="530.6" width="4" height="1.6" fill="#a68a6e"/><rect x="1146" y="530.6" width="4" height="1.6" fill="#7a6aa8"/><rect x="1150" y="530.6" width="3" height="1.6" fill="#a2a2a2"/><rect x="1153" y="530.6" width="9" height="1.6" fill="#7a6aa8"/><rect x="1162" y="530.6" width="9" height="1.6" fill="#5e9a94"/><rect x="1171" y="530.6" width="14" height="1.6" fill="#a68a6e"/><rect x="1185" y="530.6" width="9" height="1.6" fill="#7a6aa8"/><rect x="1194" y="530.6" width="3" height="1.6" fill="#7a6aa8"/><rect x="1197" y="530.6" width="3" height="1.6" fill="#7a6aa8"/><rect x="1200" y="530.6" width="6" height="1.6" fill="#a2a2a2"/><rect x="1206" y="530.6" width="3" height="1.6" fill="#a68a6e"/><rect x="1209" y="530.6" width="9" height="1.6" fill="#8a9eb0"/><rect x="1218" y="530.6" width="4" height="1.6" fill="#a2a2a2"/><rect x="1222" y="530.6" width="2" height="1.6" fill="#8a70b0"/><rect x="1224" y="530.6" width="4" height="1.6" fill="#8a9eb0"/><rect x="1228" y="530.6" width="4" height="1.6" fill="#a68a6e"/><rect x="1232" y="530.6" width="14" height="1.6" fill="#a2a2a2"/><rect x="1246" y="530.6" width="4" height="1.6" fill="#8a9eb0"/><rect x="1250" y="530.6" width="14" height="1.6" fill="#5e9a94"/><rect x="1264" y="530.6" width="4" height="1.6" fill="#8a70b0"/><rect x="1268" y="530.6" width="3" height="1.6" fill="#8a70b0"/><rect x="1271" y="530.6" width="3" height="1.6" fill="#8a9eb0"/><rect x="1274" y="530.6" width="3" height="1.6" fill="#5e9a94"/><rect x="1277" y="530.6" width="3" height="1.6" fill="#8a9eb0"/><rect x="1280" y="530.6" width="9" height="1.6" fill="#a2a2a2"/><rect x="1289" y="530.6" width="2" height="1.6" fill="#8a9eb0"/><rect x="1291" y="530.6" width="14" height="1.6" fill="#5e9a94"/><rect x="1305" y="530.6" width="14" height="1.6" fill="#8a70b0"/><rect x="1319" y="530.6" width="14" height="1.6" fill="#8a70b0"/><rect x="1333" y="530.6" width="6" height="1.6" fill="#7a6aa8"/><rect x="1339" y="530.6" width="14" height="1.6" fill="#7a6aa8"/><rect x="1353" y="530.6" width="3" height="1.6" fill="#8a9eb0"/><rect x="1356" y="530.6" width="3" height="1.6" fill="#8a9eb0"/><rect x="1359" y="530.6" width="14" height="1.6" fill="#5e9a94"/><rect x="1373" y="530.6" width="2" height="1.6" fill="#7a6aa8"/><rect x="1375" y="530.6" width="14" height="1.6" fill="#8a9eb0"/><rect x="1389" y="530.6" width="6" height="1.6" fill="#8a9eb0"/><rect x="1395" y="530.6" width="14" height="1.6" fill="#8a70b0"/><rect x="1409" y="530.6" width="14" height="1.6" fill="#a68a6e"/><rect x="1423" y="530.6" width="3" height="1.6" fill="#a68a6e"/><rect x="1426" y="530.6" width="2" height="1.6" fill="#a68a6e"/><rect x="1428" y="530.6" width="9" height="1.6" fill="#8a9eb0"/><rect x="1437" y="530.6" width="14" height="1.6" fill="#a68a6e"/><rect x="1451" y="530.6" width="9" height="1.6" fill="#7a6aa8"/><rect x="1460" y="530.6" width="9" height="1.6" fill="#8a9eb0"/><rect x="1469" y="530.6" width="14" height="1.6" fill="#5e9a94"/><rect x="1483" y="530.6" width="3" height="1.6" fill="#a2a2a2"/><rect x="1486" y="530.6" width="9" height="1.6" fill="#a68a6e"/><rect x="1495" y="530.6" width="2" height="1.6" fill="#8a70b0"/><rect x="1497" y="530.6" width="14" height="1.6" fill="#a2a2a2"/><rect x="1511" y="530.6" width="2" height="1.6" fill="#a2a2a2"/><rect x="1513" y="530.6" width="14" height="1.6" fill="#a68a6e"/><rect x="1527" y="530.6" width="6" height="1.6" fill="#7a6aa8"/><rect x="1533" y="530.6" width="3" height="1.6" fill="#7a6aa8"/><rect x="1536" y="530.6" width="3" height="1.6" fill="#8a70b0"/><rect x="1539" y="530.6" width="4" height="1.6" fill="#a68a6e"/><rect x="1543" y="530.6" width="4" height="1.6" fill="#a2a2a2"/><rect x="1547" y="530.6" width="3" height="1.6" fill="#7a6aa8"/><rect x="1550" y="530.6" width="9" height="1.6" fill="#5e9a94"/><rect x="1559" y="530.6" width="4" height="1.6" fill="#a2a2a2"/><rect x="1563" y="530.6" width="6" height="1.6" fill="#7a6aa8"/><rect x="1569" y="530.6" width="3" height="1.6" fill="#8a70b0"/><rect x="1572" y="530.6" width="14" height="1.6" fill="#5e9a94"/><rect x="1586" y="530.6" width="6" height="1.6" fill="#ffffff"/><rect x="1592" y="530.6" width="9" height="1.6" fill="#b0c8f0"/><rect x="1601" y="530.6" width="9" height="1.6" fill="#e8a878"/><rect x="1610" y="530.6" width="9" height="1.6" fill="#e8a878"/><rect x="1619" y="530.6" width="9" height="1.6" fill="#ffffff"/><rect x="1628" y="530.6" width="2" height="1.6" fill="#b0c8f0"/><rect x="1630" y="530.6" width="3" height="1.6" fill="#ffffff"/><rect x="1633" y="530.6" width="2" height="1.6" fill="#e8a878"/><rect x="1635" y="530.6" width="3" height="1.6" fill="#e8a878"/><rect x="1638" y="530.6" width="6" height="1.6" fill="#ffffff"/><rect x="1644" y="530.6" width="14" height="1.6" fill="#a070f0"/></svg>
<div style="position:absolute;left:1639.5px;top:496px;font-size:11px;line-height:1;color:#fff;font-weight:400;white-space:nowrap;">3</div>
<svg style="position:absolute;left:1575px;top:495px" width="30" height="40"><path d="M9 36 Q12 18 19 8" stroke="#e01010" stroke-width="1.6" fill="none"/><path d="M14 3 L20 7.5 L13 11" stroke="#e01010" stroke-width="1.6" fill="none"/></svg>
<svg style="position:absolute;left:0;top:0" width="1646" height="915"><rect x="394" y="309.7" width="1168" height="1.9" fill="#f2f200"/><path d="M390 310.6 L397.5 306.6 L396 310.6 L397.5 314.6 Z" fill="#f2f200"/><path d="M1568.5 310.6 L1561 306.6 L1562.5 310.6 L1561 314.6 Z" fill="#f2f200"/><rect x="314" y="441.9" width="1266" height="1.9" fill="#f2f200"/><path d="M310 442.8 L317.5 438.8 L316 442.8 L317.5 446.8 Z" fill="#f2f200"/><path d="M1586 442.8 L1578.5 438.8 L1580 442.8 L1578.5 446.8 Z" fill="#f2f200"/></svg>
<div style="position:absolute;left:954px;top:303.3px;width:50px;height:15px;background:#ee0000;"></div>
<div style="position:absolute;left:958.5px;top:306.6px;font-size:10.4px;line-height:1;color:#fff;font-weight:400;white-space:nowrap;">120.4fps</div>
<div style="position:absolute;left:923px;top:435.5px;width:50.5px;height:15px;background:#ee0000;"></div>
<div style="position:absolute;left:927px;top:441.2px;font-size:10.4px;line-height:1;color:#fff;font-weight:400;white-space:nowrap;">106.7fps</div>
<svg style="position:absolute;left:0;top:0" width="1646" height="915"><text x="291.4" y="147.6" textLength="41.8" lengthAdjust="spacingAndGlyphs" font-family="Liberation Sans" font-size="10.8" font-weight="400" fill="#3a3a3a">H:event...</text><text x="293" y="165.6" textLength="40.2" lengthAdjust="spacingAndGlyphs" font-family="Liberation Sans" font-size="10.8" font-weight="400" fill="#3a3a3a">H:Dispa...</text><text x="294.7" y="183.6" textLength="38.0" lengthAdjust="spacingAndGlyphs" font-family="Liberation Sans" font-size="10.8" font-weight="400" fill="#dfe6e2">H:Exec...</text><text x="294.7" y="201.6" textLength="38.0" lengthAdjust="spacingAndGlyphs" font-family="Liberation Sans" font-size="10.8" font-weight="400" fill="#333">H:Exec...</text><text x="295.2" y="219.6" textLength="34.8" lengthAdjust="spacingAndGlyphs" font-family="Liberation Sans" font-size="10.8" font-weight="400" fill="#dfe6e2">H:stat...</text><text x="295.5" y="237.6" textLength="36.9" lengthAdjust="spacingAndGlyphs" font-family="Liberation Sans" font-size="10.8" font-weight="400" fill="#333">H:OHOS...</text><text x="295.8" y="255.6" textLength="37.0" lengthAdjust="spacingAndGlyphs" font-family="Liberation Sans" font-size="10.8" font-weight="400" fill="#dfe6e2">H:OHOS...</text><text x="296.3" y="273.6" textLength="36.9" lengthAdjust="spacingAndGlyphs" font-family="Liberation Sans" font-size="10.8" font-weight="400" fill="#dfe6e2">binder...</text><text x="633.4" y="146.8" textLength="208.2" lengthAdjust="spacingAndGlyphs" font-family="Liberation Sans" font-size="10.5" font-weight="700" fill="#dcd4e6">H:Napi complete, name:Release, traceid:0x0</text><text x="594.4" y="164.8" textLength="284.9" lengthAdjust="spacingAndGlyphs" font-family="Liberation Sans" font-size="10.3" font-weight="400" fill="#333">H:int32_t OHOS::CameraStandard::CaptureSession::Release()</text><text x="693" y="182.8" textLength="87.3" lengthAdjust="spacingAndGlyphs" font-family="Liberation Sans" font-size="10.8" font-weight="700" fill="#dcd4e6">binder transaction</text></svg>
<svg style="position:absolute;left:182.6px;top:198.7px" width="14" height="14"><path d="M7.00 0.60 L8.85 4.65 L13.28 5.16 L10.00 8.17 L10.88 12.54 L7.00 10.35 L3.12 12.54 L4.00 8.17 L0.72 5.16 L5.15 4.65 Z" fill="#4f8ef0"/></svg>
<svg width="18" height="18" style="position:absolute;left:204px;top:196.2px"><rect x="0.7" y="0.7" width="16.6" height="16.6" rx="3" fill="#fff" stroke="#5a9ae8" stroke-width="1.3"/><path d="M3.3 9.4 L7.4 13.4 L15.8 5.1" stroke="#5a9ae8" stroke-width="1.25" fill="none"/></svg>
<svg style="position:absolute;left:182.6px;top:339.7px" width="14" height="14"><path d="M7.00 0.60 L8.85 4.65 L13.28 5.16 L10.00 8.17 L10.88 12.54 L7.00 10.35 L3.12 12.54 L4.00 8.17 L0.72 5.16 L5.15 4.65 Z" fill="#4f8ef0"/></svg>
<svg width="18" height="18" style="position:absolute;left:204px;top:337px"><rect x="0.7" y="0.7" width="16.6" height="16.6" rx="3" fill="#fff" stroke="#5a9ae8" stroke-width="1.3"/><path d="M3.3 9.4 L7.4 13.4 L15.8 5.1" stroke="#5a9ae8" stroke-width="1.25" fill="none"/></svg>
<svg style="position:absolute;left:182.6px;top:444.2px" width="14" height="14"><path d="M7.00 0.60 L8.85 4.65 L13.28 5.16 L10.00 8.17 L10.88 12.54 L7.00 10.35 L3.12 12.54 L4.00 8.17 L0.72 5.16 L5.15 4.65 Z" fill="#4f8ef0"/></svg>
<svg width="18" height="18" style="position:absolute;left:204px;top:442px"><rect x="0.7" y="0.7" width="16.6" height="16.6" rx="3" fill="#fff" stroke="#5a9ae8" stroke-width="1.3"/><path d="M3.3 9.4 L7.4 13.4 L15.8 5.1" stroke="#5a9ae8" stroke-width="1.25" fill="none"/></svg>
<svg style="position:absolute;left:182.6px;top:503.5px" width="14" height="14"><path d="M7.00 0.60 L8.85 4.65 L13.28 5.16 L10.00 8.17 L10.88 12.54 L7.00 10.35 L3.12 12.54 L4.00 8.17 L0.72 5.16 L5.15 4.65 Z" fill="#4f8ef0"/></svg>
<svg width="18" height="18" style="position:absolute;left:204px;top:501px"><rect x="0.7" y="0.7" width="16.6" height="16.6" rx="3" fill="#fff" stroke="#5a9ae8" stroke-width="1.3"/><path d="M3.3 9.4 L7.4 13.4 L15.8 5.1" stroke="#5a9ae8" stroke-width="1.25" fill="none"/></svg>
<svg style="position:absolute;left:0;top:0" width="1646" height="915"><text x="10.3" y="210.8" textLength="168.2" lengthAdjust="spacing" font-family="Liberation Sans" font-size="15" fill="#555a5e">mple.camerademo 255...</text><text x="10.3" y="351.6" textLength="136.6" lengthAdjust="spacing" font-family="Liberation Sans" font-size="15" fill="#555a5e">render_service 1408</text><text x="10.3" y="456.7" textLength="163.1" lengthAdjust="spacing" font-family="Liberation Sans" font-size="15" fill="#555a5e">RSHardwareThrea 194...</text><text x="10.3" y="515.6" textLength="165" lengthAdjust="spacing" font-family="Liberation Sans" font-size="15" fill="#555a5e">Actual Timeline(Frame...</text></svg>
<div style="position:absolute;left:0px;top:530.6px;width:248px;height:1.8px;background:#a2a2a2;"></div>
<div style="position:absolute;left:11px;top:529.8px;width:1.3px;height:2.2px;background:#555;"></div>
<div style="position:absolute;left:17px;top:529.8px;width:1.3px;height:2.2px;background:#555;"></div>
<div style="position:absolute;left:21.5px;top:529.8px;width:1.3px;height:2.2px;background:#555;"></div>
<div style="position:absolute;left:25px;top:529.8px;width:1.3px;height:2.2px;background:#555;"></div>
<div style="position:absolute;left:30px;top:529.8px;width:1.3px;height:2.2px;background:#555;"></div>
<div style="position:absolute;left:44px;top:529.8px;width:1.3px;height:2.2px;background:#555;"></div>
<div style="position:absolute;left:200.5px;top:529.8px;width:1.3px;height:2.2px;background:#555;"></div>
<div style="position:absolute;left:217.5px;top:529.8px;width:1.3px;height:2.2px;background:#555;"></div>
<div style="position:absolute;left:0px;top:532.4px;width:1646px;height:39px;background:#f0f0f0;"></div>
<div style="position:absolute;left:0;top:532.4px;width:1646px;height:14px;background:linear-gradient(to bottom,rgba(0,0,0,0.25),rgba(0,0,0,0.1) 40%,rgba(0,0,0,0))"></div>
<div style="position:absolute;left:6px;top:538.3px;width:63.5px;height:33px;border:1px solid #cfcfcf;border-bottom:none;border-radius:5px 5px 0 0;background:#f5f5f5"></div>
<div style="position:absolute;left:19.2px;top:551.5px;font-size:14px;line-height:1;color:#333;font-weight:400;white-space:nowrap;">Slices</div>
<svg style="position:absolute;left:1580px;top:540px" width="56" height="24"><path d="M8.8 14.2 L5.3 14.2 L5.3 5.2 L18.6 5.2 L18.6 14.2 L15.2 14.2" stroke="#4a4a4a" stroke-width="2.3" fill="none" stroke-linejoin="miter"/><path d="M11.9 9.3 L11.9 17" stroke="#4a4a4a" stroke-width="1.8"/><path d="M8.2 16.3 L15.6 16.3 L11.9 20.2 Z" fill="#4a4a4a"/><path d="M34.3 5.5 L49.8 5.5" stroke="#4a4a4a" stroke-width="2.4"/><path d="M41.9 12 L41.9 19.6" stroke="#4a4a4a" stroke-width="2"/><path d="M37.5 13.2 L41.9 8.3 L46.3 13.2 Z" fill="#4a4a4a"/></svg>
<div style="position:absolute;left:0px;top:571px;width:1646px;height:344px;background:#ffffff;"></div>
<div style="position:absolute;left:1642px;top:606px;width:1px;height:309px;background:#efefef;"></div>
<div style="position:absolute;left:0;top:571px;width:8px;height:344px;background:linear-gradient(to right,#f4f4f4,#fff)"></div>
<div style="position:absolute;left:10.2px;top:581.5px;width:417.5px;height:21px;border:1px solid #c4c4c4;border-radius:10px;background:#fff"></div>
<div style="position:absolute;left:13.4px;top:585.3px;font-size:13px;line-height:1;color:#7a7a7a;font-weight:400;white-space:nowrap;">Search</div>
<div style="position:absolute;left:1472.4px;top:582.5px;font-size:14px;line-height:1;color:#333;font-weight:400;white-space:nowrap;">Selected range: 457.54971 ms</div>
<div style="position:absolute;left:518px;top:611px;width:1.5px;height:19px;background:#d0d0d0;"></div>
<div style="position:absolute;left:896px;top:611px;width:1.5px;height:19px;background:#d0d0d0;"></div>
<div style="position:absolute;left:1276px;top:611px;width:1.5px;height:19px;background:#d0d0d0;"></div>
<div style="position:absolute;left:13.4px;top:611.8px;font-size:15.5px;line-height:1;color:#111;font-weight:700;white-space:nowrap;">Name</div>
<div style="position:absolute;left:523.4px;top:612px;font-size:15.3px;line-height:1;color:#111;font-weight:700;white-space:nowrap;">Wall duration(ms)</div>
<div style="position:absolute;left:901.6px;top:612px;font-size:15.3px;line-height:1;color:#111;font-weight:700;white-space:nowrap;">Avg Wall duration(ms)</div>
<div style="position:absolute;left:1280.5px;top:612.3px;font-size:14.6px;line-height:1;color:#111;font-weight:700;white-space:nowrap;">Occurrences</div>
<div style="position:absolute;left:519.6px;top:638.915px;font-size:17px;line-height:1;color:#2a2a2a;font-weight:400;white-space:nowrap;">1226.55262</div>
<div style="position:absolute;left:1275.5px;top:638.915px;font-size:17px;line-height:1;color:#2a2a2a;font-weight:400;white-space:nowrap;">4074</div>
<div style="position:absolute;left:519.6px;top:665.915px;font-size:17px;line-height:1;color:#2a2a2a;font-weight:400;white-space:nowrap;">255.275</div>
<div style="position:absolute;left:897px;top:665.915px;font-size:17px;line-height:1;color:#2a2a2a;font-weight:400;white-space:nowrap;">1.58556</div>
<div style="position:absolute;left:1275.5px;top:665.915px;font-size:17px;line-height:1;color:#2a2a2a;font-weight:400;white-space:nowrap;">161</div>
<div style="position:absolute;left:519.6px;top:692.915px;font-size:17px;line-height:1;color:#2a2a2a;font-weight:400;white-space:nowrap;">139.39323</div>
<div style="position:absolute;left:897px;top:692.915px;font-size:17px;line-height:1;color:#2a2a2a;font-weight:400;white-space:nowrap;">46.46441</div>
<div style="position:absolute;left:1275.5px;top:692.915px;font-size:17px;line-height:1;color:#2a2a2a;font-weight:400;white-space:nowrap;">3</div>
<div style="position:absolute;left:519.6px;top:719.915px;font-size:17px;line-height:1;color:#2a2a2a;font-weight:400;white-space:nowrap;">139.13646</div>
<div style="position:absolute;left:897px;top:719.915px;font-size:17px;line-height:1;color:#2a2a2a;font-weight:400;white-space:nowrap;">139.13646</div>
<div style="position:absolute;left:1275.5px;top:719.915px;font-size:17px;line-height:1;color:#2a2a2a;font-weight:400;white-space:nowrap;">1</div>
<div style="position:absolute;left:519.6px;top:746.915px;font-size:17px;line-height:1;color:#2a2a2a;font-weight:400;white-space:nowrap;">106.61093</div>
<div style="position:absolute;left:897px;top:746.915px;font-size:17px;line-height:1;color:#2a2a2a;font-weight:400;white-space:nowrap;">2.17573</div>
<div style="position:absolute;left:1275.5px;top:746.915px;font-size:17px;line-height:1;color:#2a2a2a;font-weight:400;white-space:nowrap;">49</div>
<div style="position:absolute;left:519.6px;top:773.915px;font-size:17px;line-height:1;color:#2a2a2a;font-weight:400;white-space:nowrap;">54.54792</div>
<div style="position:absolute;left:897px;top:773.915px;font-size:17px;line-height:1;color:#2a2a2a;font-weight:400;white-space:nowrap;">1.13642</div>
<div style="position:absolute;left:1275.5px;top:773.915px;font-size:17px;line-height:1;color:#2a2a2a;font-weight:400;white-space:nowrap;">48</div>
<div style="position:absolute;left:519.6px;top:800.915px;font-size:17px;line-height:1;color:#2a2a2a;font-weight:400;white-space:nowrap;">40.33959</div>
<div style="position:absolute;left:897px;top:800.915px;font-size:17px;line-height:1;color:#2a2a2a;font-weight:400;white-space:nowrap;">0.82326</div>
<div style="position:absolute;left:1275.5px;top:800.915px;font-size:17px;line-height:1;color:#2a2a2a;font-weight:400;white-space:nowrap;">49</div>
<div style="position:absolute;left:519.6px;top:827.915px;font-size:17px;line-height:1;color:#2a2a2a;font-weight:400;white-space:nowrap;">26.23178</div>
<div style="position:absolute;left:897px;top:827.915px;font-size:17px;line-height:1;color:#2a2a2a;font-weight:400;white-space:nowrap;">0.53534</div>
<div style="position:absolute;left:1275.5px;top:827.915px;font-size:17px;line-height:1;color:#2a2a2a;font-weight:400;white-space:nowrap;">49</div>
<div style="position:absolute;left:519.6px;top:854.915px;font-size:17px;line-height:1;color:#2a2a2a;font-weight:400;white-space:nowrap;">18.31615</div>
<div style="position:absolute;left:897px;top:854.915px;font-size:17px;line-height:1;color:#2a2a2a;font-weight:400;white-space:nowrap;">18.31615</div>
<div style="position:absolute;left:1275.5px;top:854.915px;font-size:17px;line-height:1;color:#2a2a2a;font-weight:400;white-space:nowrap;">1</div>
<div style="position:absolute;left:519.6px;top:881.915px;font-size:17px;line-height:1;color:#2a2a2a;font-weight:400;white-space:nowrap;">17.68959</div>
<div style="position:absolute;left:897px;top:881.915px;font-size:17px;line-height:1;color:#2a2a2a;font-weight:400;white-space:nowrap;">0.36101</div>
<div style="position:absolute;left:1275.5px;top:881.915px;font-size:17px;line-height:1;color:#2a2a2a;font-weight:400;white-space:nowrap;">49</div>
<svg style="position:absolute;left:0;top:0" width="1646" height="915"><text x="14.5" y="680" textLength="138.9" lengthAdjust="spacing" font-family="Liberation Sans" font-size="16.8" fill="#2a2a2a">binder transaction</text><text x="14.5" y="707" textLength="332.5" lengthAdjust="spacing" font-family="Liberation Sans" font-size="16.8" fill="#2a2a2a">H:Napi complete, name:Release, traceid:0x0</text><text x="14.5" y="734" textLength="455.7" lengthAdjust="spacing" font-family="Liberation Sans" font-size="16.8" fill="#2a2a2a">H:int32_t OHOS::CameraStandard::CaptureSession::Release()</text><text x="14.5" y="761" textLength="73.3" lengthAdjust="spacing" font-family="Liberation Sans" font-size="16.8" fill="#2a2a2a">H:Repaint</text><text x="14.5" y="788" textLength="76.1" lengthAdjust="spacing" font-family="Liberation Sans" font-size="16.8" fill="#2a2a2a">H:Commit</text><text x="14.5" y="815" textLength="236.8" lengthAdjust="spacing" font-family="Liberation Sans" font-size="16.8" fill="#2a2a2a">H:CommitAndGetReleaseFence</text><text x="14.5" y="842" textLength="389" lengthAdjust="spacing" font-family="Liberation Sans" font-size="16.8" fill="#2a2a2a">H:RSUniRender:QuickPrepareDisplayRenderNode 0</text><text x="14.5" y="869" textLength="297.4" lengthAdjust="spacing" font-family="Liberation Sans" font-size="16.8" fill="#2a2a2a">H:eventConsume pointerEventId:39289</text><text x="14.5" y="896" textLength="231" lengthAdjust="spacing" font-family="Liberation Sans" font-size="16.8" fill="#2a2a2a">H:PostAndWait, parallel type 0</text></svg>
</body></html>
